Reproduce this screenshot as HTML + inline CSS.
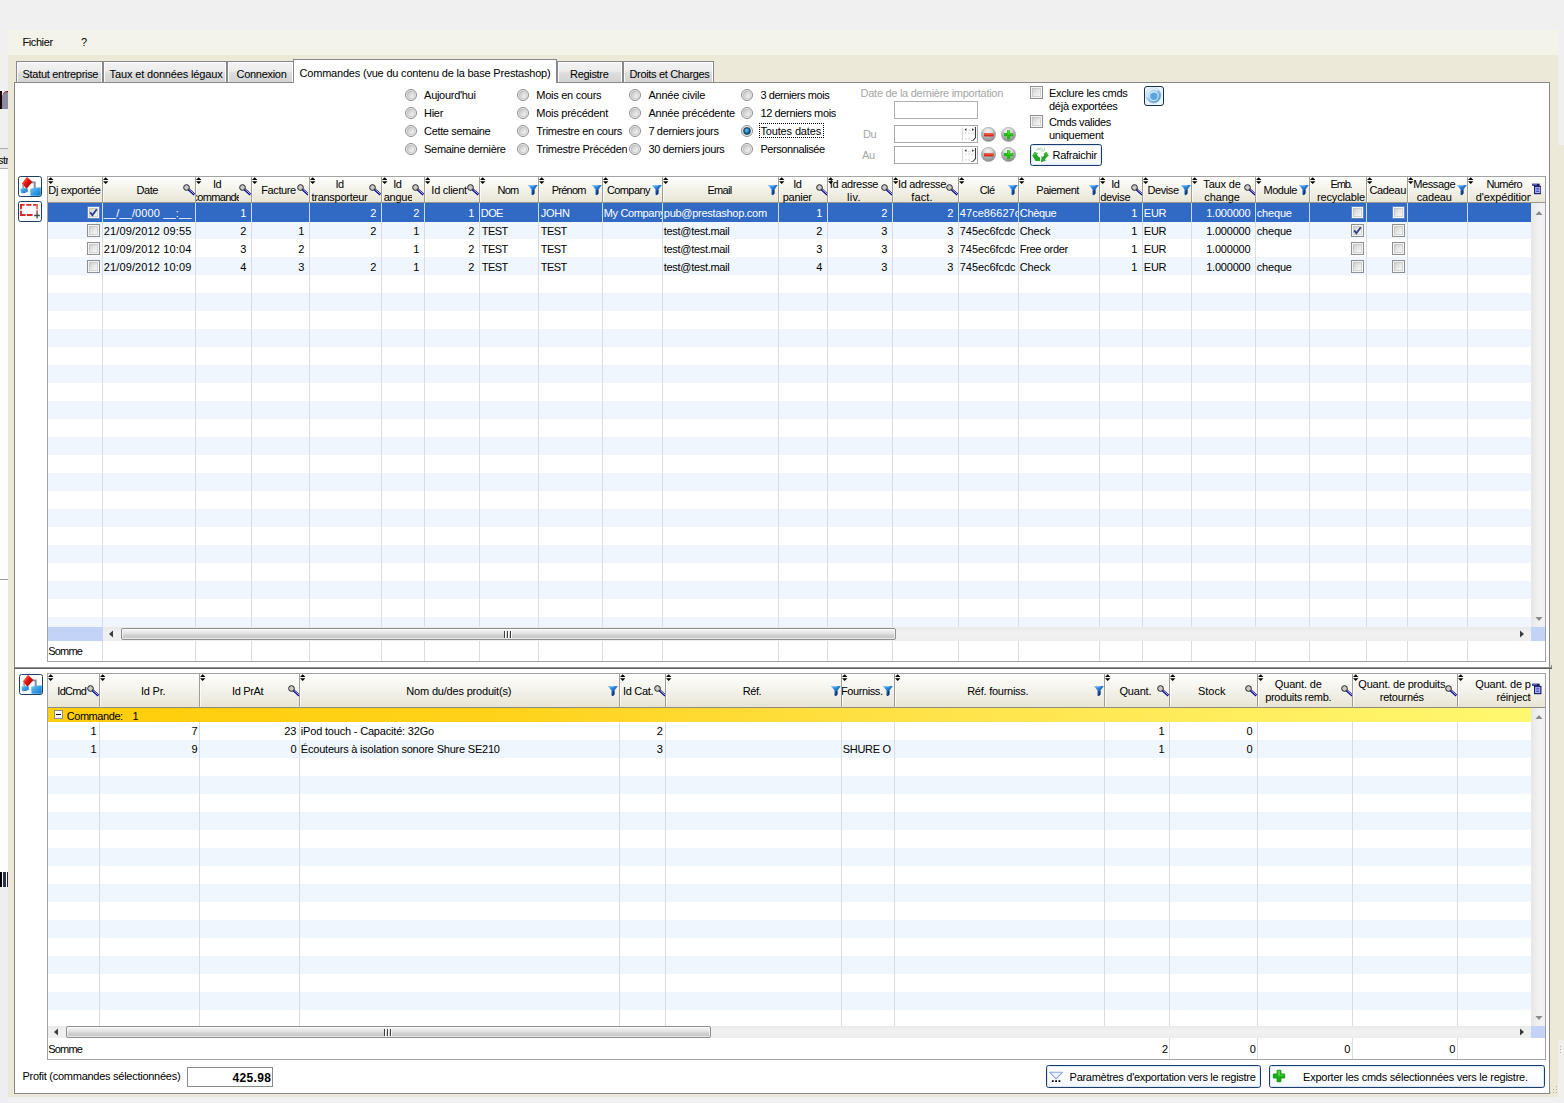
<!DOCTYPE html>
<html><head><meta charset="utf-8"><title>Commandes</title>
<style>
html,body{margin:0;padding:0}
body{width:1564px;height:1103px;overflow:hidden;background:#f0f0f0;position:relative;
font-family:"Liberation Sans", sans-serif;font-size:11px;line-height:13px;color:#000}
div,span.t,svg{position:absolute;box-sizing:border-box}
span.t{white-space:pre;display:block}
</style></head>
<body>
<div style="left:0px;top:169px;width:8px;height:718px;background:#fdfdfd"></div>
<div style="left:0px;top:887px;width:8px;height:216px;background:#eeeef2"></div>
<div style="left:0px;top:91px;width:2px;height:18px;background:#1a0508"></div>
<div style="left:2px;top:91px;width:6px;height:18px;background:#8d8ba2;border-top-left-radius:5px 8px;border-top:1px solid #7a1018"></div>
<div style="left:0px;top:148px;width:8px;height:21px;background:#e9e9e9;border-top:1px solid #b0b0b0;border-bottom:1px solid #b0b0b0"></div>
<span class="t" style="left:-2.00px;top:154.00px;letter-spacing:-0.578px;">str</span>
<div style="left:0px;top:579px;width:8px;height:1px;background:#9a9a9a"></div>
<div style="left:0px;top:872px;width:2px;height:15px;background:#000"></div>
<div style="left:3px;top:872px;width:3px;height:15px;background:#2b3152"></div>
<div style="left:7px;top:872px;width:1px;height:15px;background:#20253c"></div>
<div style="left:8px;top:30px;width:1556px;height:1067px;background:#ece9d8"></div>
<div style="left:8px;top:30px;width:1550px;height:25px;background:#f4f3ea"></div>
<div style="left:1558px;top:30px;width:6px;height:115px;background:#f0f0f0"></div>
<div style="left:1558px;top:1040px;width:6px;height:57px;background:#f1f0ea"></div>
<span class="t" style="left:22.40px;top:36.00px;letter-spacing:-0.388px;">Fichier</span>
<span class="t" style="left:81.00px;top:36.00px;letter-spacing:-0.337px;">?</span>
<div style="left:14px;top:82px;width:1536px;height:1012px;background:#fff;border:1px solid #87888c"></div>
<div style="left:16px;top:61px;width:87px;height:21px;background:linear-gradient(#f3f3f3 0%,#ececec 45%,#dddddd 55%,#d4d4d4 100%);border:1px solid #87888c;border-bottom:none;box-shadow:inset 1px 1px 0 #fcfcfc, inset -1px 0 0 #fcfcfc"></div>
<span class="t" style="left:22.50px;top:68.00px;letter-spacing:-0.295px;">Statut entreprise</span>
<div style="left:103px;top:61px;width:124px;height:21px;background:linear-gradient(#f3f3f3 0%,#ececec 45%,#dddddd 55%,#d4d4d4 100%);border:1px solid #87888c;border-bottom:none;box-shadow:inset 1px 1px 0 #fcfcfc, inset -1px 0 0 #fcfcfc"></div>
<span class="t" style="left:109.60px;top:68.00px;letter-spacing:-0.146px;">Taux et données légaux</span>
<div style="left:227px;top:61px;width:67px;height:21px;background:linear-gradient(#f3f3f3 0%,#ececec 45%,#dddddd 55%,#d4d4d4 100%);border:1px solid #87888c;border-bottom:none;box-shadow:inset 1px 1px 0 #fcfcfc, inset -1px 0 0 #fcfcfc"></div>
<span class="t" style="left:236.50px;top:68.00px;letter-spacing:-0.288px;">Connexion</span>
<div style="left:557px;top:61px;width:66px;height:21px;background:linear-gradient(#f3f3f3 0%,#ececec 45%,#dddddd 55%,#d4d4d4 100%);border:1px solid #87888c;border-bottom:none;box-shadow:inset 1px 1px 0 #fcfcfc, inset -1px 0 0 #fcfcfc"></div>
<span class="t" style="left:570.00px;top:68.00px;letter-spacing:-0.309px;">Registre</span>
<div style="left:623px;top:61px;width:91px;height:21px;background:linear-gradient(#f3f3f3 0%,#ececec 45%,#dddddd 55%,#d4d4d4 100%);border:1px solid #87888c;border-bottom:none;box-shadow:inset 1px 1px 0 #fcfcfc, inset -1px 0 0 #fcfcfc"></div>
<span class="t" style="left:629.50px;top:68.00px;letter-spacing:-0.329px;">Droits et Charges</span>
<div style="left:293px;top:59px;width:264px;height:24px;background:#fff;border:1px solid #87888c;border-bottom:none"></div>
<span class="t" style="left:299.50px;top:67.00px;letter-spacing:-0.198px;">Commandes (vue du contenu de la base Prestashop)</span>
<svg width="0" height="0" style="left:0;top:0"><defs><linearGradient id="rbg" x1="0" y1="0" x2="1" y2="1"><stop offset="0" stop-color="#bdbdbd"/><stop offset="0.5" stop-color="#e0e0e0"/><stop offset="1" stop-color="#fcfcfc"/></linearGradient><radialGradient id="rdot" cx="0.45" cy="0.4" r="0.65"><stop offset="0" stop-color="#74ccf0"/><stop offset="0.45" stop-color="#2584be"/><stop offset="1" stop-color="#0c3a60"/></radialGradient><linearGradient id="cbg" x1="0" y1="0" x2="1" y2="1"><stop offset="0" stop-color="#cbcbcb"/><stop offset="0.55" stop-color="#e9e9e9"/><stop offset="1" stop-color="#fbfbfb"/></linearGradient><linearGradient id="fun" x1="0" y1="0" x2="0.8" y2="1"><stop offset="0" stop-color="#4fb0f4"/><stop offset="0.4" stop-color="#2a80d6"/><stop offset="0.75" stop-color="#144a9c"/><stop offset="1" stop-color="#0a2466"/></linearGradient><radialGradient id="sph" cx="0.45" cy="0.25" r="0.85"><stop offset="0" stop-color="#ececec"/><stop offset="0.55" stop-color="#aeb2b2"/><stop offset="1" stop-color="#727676"/></radialGradient><linearGradient id="bluec" x1="0" y1="0" x2="1" y2="1"><stop offset="0" stop-color="#c6dcea"/><stop offset="0.45" stop-color="#9ccaec"/><stop offset="1" stop-color="#2f7fc4"/></linearGradient></defs></svg>
<svg style="left:404.6px;top:89px" width="12" height="12" viewBox="0 0 12 12"><circle cx="6" cy="6" r="5.5" fill="#f3f3f3" stroke="#8a8b8b" stroke-width="1"/><circle cx="6" cy="6" r="3.9" fill="url(#rbg)" stroke="#b6b6b6" stroke-width="0.7"/></svg>
<span class="t" style="left:424.10px;top:89.00px;letter-spacing:-0.291px;">Aujourd&#x27;hui</span>
<svg style="left:516.8px;top:89px" width="12" height="12" viewBox="0 0 12 12"><circle cx="6" cy="6" r="5.5" fill="#f3f3f3" stroke="#8a8b8b" stroke-width="1"/><circle cx="6" cy="6" r="3.9" fill="url(#rbg)" stroke="#b6b6b6" stroke-width="0.7"/></svg>
<span class="t" style="left:536.30px;top:89.00px;letter-spacing:-0.268px;">Mois en cours</span>
<svg style="left:628.9px;top:89px" width="12" height="12" viewBox="0 0 12 12"><circle cx="6" cy="6" r="5.5" fill="#f3f3f3" stroke="#8a8b8b" stroke-width="1"/><circle cx="6" cy="6" r="3.9" fill="url(#rbg)" stroke="#b6b6b6" stroke-width="0.7"/></svg>
<span class="t" style="left:648.40px;top:89.00px;letter-spacing:-0.219px;">Année civile</span>
<svg style="left:740.9px;top:89px" width="12" height="12" viewBox="0 0 12 12"><circle cx="6" cy="6" r="5.5" fill="#f3f3f3" stroke="#8a8b8b" stroke-width="1"/><circle cx="6" cy="6" r="3.9" fill="url(#rbg)" stroke="#b6b6b6" stroke-width="0.7"/></svg>
<span class="t" style="left:760.40px;top:89.00px;letter-spacing:-0.420px;">3 derniers mois</span>
<svg style="left:404.6px;top:107px" width="12" height="12" viewBox="0 0 12 12"><circle cx="6" cy="6" r="5.5" fill="#f3f3f3" stroke="#8a8b8b" stroke-width="1"/><circle cx="6" cy="6" r="3.9" fill="url(#rbg)" stroke="#b6b6b6" stroke-width="0.7"/></svg>
<span class="t" style="left:424.10px;top:107.00px;letter-spacing:-0.318px;">Hier</span>
<svg style="left:516.8px;top:107px" width="12" height="12" viewBox="0 0 12 12"><circle cx="6" cy="6" r="5.5" fill="#f3f3f3" stroke="#8a8b8b" stroke-width="1"/><circle cx="6" cy="6" r="3.9" fill="url(#rbg)" stroke="#b6b6b6" stroke-width="0.7"/></svg>
<span class="t" style="left:536.30px;top:107.00px;letter-spacing:-0.251px;">Mois précédent</span>
<svg style="left:628.9px;top:107px" width="12" height="12" viewBox="0 0 12 12"><circle cx="6" cy="6" r="5.5" fill="#f3f3f3" stroke="#8a8b8b" stroke-width="1"/><circle cx="6" cy="6" r="3.9" fill="url(#rbg)" stroke="#b6b6b6" stroke-width="0.7"/></svg>
<span class="t" style="left:648.40px;top:107.00px;letter-spacing:-0.214px;">Année précédente</span>
<svg style="left:740.9px;top:107px" width="12" height="12" viewBox="0 0 12 12"><circle cx="6" cy="6" r="5.5" fill="#f3f3f3" stroke="#8a8b8b" stroke-width="1"/><circle cx="6" cy="6" r="3.9" fill="url(#rbg)" stroke="#b6b6b6" stroke-width="0.7"/></svg>
<span class="t" style="left:760.40px;top:107.00px;letter-spacing:-0.364px;">12 derniers mois</span>
<svg style="left:404.6px;top:125px" width="12" height="12" viewBox="0 0 12 12"><circle cx="6" cy="6" r="5.5" fill="#f3f3f3" stroke="#8a8b8b" stroke-width="1"/><circle cx="6" cy="6" r="3.9" fill="url(#rbg)" stroke="#b6b6b6" stroke-width="0.7"/></svg>
<span class="t" style="left:424.10px;top:125.00px;letter-spacing:-0.357px;">Cette semaine</span>
<svg style="left:516.8px;top:125px" width="12" height="12" viewBox="0 0 12 12"><circle cx="6" cy="6" r="5.5" fill="#f3f3f3" stroke="#8a8b8b" stroke-width="1"/><circle cx="6" cy="6" r="3.9" fill="url(#rbg)" stroke="#b6b6b6" stroke-width="0.7"/></svg>
<span class="t" style="left:536.30px;top:125.00px;letter-spacing:-0.311px;">Trimestre en cours</span>
<svg style="left:628.9px;top:125px" width="12" height="12" viewBox="0 0 12 12"><circle cx="6" cy="6" r="5.5" fill="#f3f3f3" stroke="#8a8b8b" stroke-width="1"/><circle cx="6" cy="6" r="3.9" fill="url(#rbg)" stroke="#b6b6b6" stroke-width="0.7"/></svg>
<span class="t" style="left:648.40px;top:125.00px;letter-spacing:-0.352px;">7 derniers jours</span>
<svg style="left:740.9px;top:125px" width="12" height="12" viewBox="0 0 12 12"><circle cx="6" cy="6" r="5.5" fill="#f3f3f3" stroke="#8a8b8b" stroke-width="1"/><circle cx="6" cy="6" r="3.9" fill="url(#rbg)" stroke="#b6b6b6" stroke-width="0.7"/><circle cx="6" cy="6" r="3.4" fill="url(#rdot)" stroke="#0d3556" stroke-width="0.7"/></svg>
<span class="t" style="left:760.40px;top:125.00px;letter-spacing:-0.140px;">Toutes dates</span>
<svg style="left:404.6px;top:143px" width="12" height="12" viewBox="0 0 12 12"><circle cx="6" cy="6" r="5.5" fill="#f3f3f3" stroke="#8a8b8b" stroke-width="1"/><circle cx="6" cy="6" r="3.9" fill="url(#rbg)" stroke="#b6b6b6" stroke-width="0.7"/></svg>
<span class="t" style="left:424.10px;top:143.00px;letter-spacing:-0.334px;">Semaine dernière</span>
<svg style="left:516.8px;top:143px" width="12" height="12" viewBox="0 0 12 12"><circle cx="6" cy="6" r="5.5" fill="#f3f3f3" stroke="#8a8b8b" stroke-width="1"/><circle cx="6" cy="6" r="3.9" fill="url(#rbg)" stroke="#b6b6b6" stroke-width="0.7"/></svg>
<div style="left:536px;top:143.00px;width:91px;height:13px;overflow:hidden"><span class="t" style="left:0.30px;top:0;letter-spacing:-0.287px;">Trimestre Précédent</span></div>
<svg style="left:628.9px;top:143px" width="12" height="12" viewBox="0 0 12 12"><circle cx="6" cy="6" r="5.5" fill="#f3f3f3" stroke="#8a8b8b" stroke-width="1"/><circle cx="6" cy="6" r="3.9" fill="url(#rbg)" stroke="#b6b6b6" stroke-width="0.7"/></svg>
<span class="t" style="left:648.40px;top:143.00px;letter-spacing:-0.343px;">30 derniers jours</span>
<svg style="left:740.9px;top:143px" width="12" height="12" viewBox="0 0 12 12"><circle cx="6" cy="6" r="5.5" fill="#f3f3f3" stroke="#8a8b8b" stroke-width="1"/><circle cx="6" cy="6" r="3.9" fill="url(#rbg)" stroke="#b6b6b6" stroke-width="0.7"/></svg>
<span class="t" style="left:760.40px;top:143.00px;letter-spacing:-0.409px;">Personnalisée</span>
<div style="left:759px;top:123px;width:65px;height:15px;border:1px dotted #000"></div>
<span class="t" style="left:860.60px;top:87.00px;letter-spacing:-0.278px;color:#a6a6a6;">Date de la dernière importation</span>
<div style="left:894px;top:101px;width:84px;height:18px;background:#fff;border:1px solid #abadb3"></div>
<span class="t" style="left:863.00px;top:128.00px;letter-spacing:-0.387px;color:#a6a6a6;">Du</span>
<span class="t" style="left:862.00px;top:149.00px;letter-spacing:-0.370px;color:#a6a6a6;">Au</span>
<div style="left:894px;top:125px;width:84px;height:18px;background:#fff;border:1px solid #a9a9a9"></div>
<svg style="left:961px;top:126px" width="16" height="16" viewBox="0 0 16 16"><path d="M1.5 1.5V14.5" stroke="#d8d8d8" stroke-width="1.2" fill="none"/><path d="M14.5 1V11.5L12 14.5" stroke="#3a3a3a" stroke-width="1.1" fill="none"/><path d="M10 14.5L12 14.5" stroke="#8a8a8a" stroke-width="1" fill="none"/><path d="M5.4 2.2L3.6 3.6L5.4 5Z M11.2 2.2L13 3.6L11.2 5Z" fill="#222"/><path d="M7 4.2H10" stroke="#ddd" stroke-width="1"/><g fill="#e2e2e2"><rect x="4" y="6.5" width="1.6" height="1.6"/><rect x="7" y="6.5" width="1.6" height="1.6"/><rect x="10" y="6.5" width="1.6" height="1.6"/><rect x="12.4" y="6.5" width="1.2" height="1.6"/><rect x="4" y="12" width="1.6" height="1.6"/><rect x="7" y="12" width="1.6" height="1.6"/></g></svg>
<svg style="left:980.9px;top:126.80000000000001px" width="15" height="15" viewBox="0 0 15 15"><circle cx="7.5" cy="7.5" r="7.1" fill="url(#sph)" stroke="#9a9aa0" stroke-width="0.6"/><ellipse cx="7.2" cy="4.2" rx="4.8" ry="2.6" fill="#fff" fill-opacity="0.35"/><rect x="3" y="6.2" width="9.6" height="3.2" rx="0.8" fill="#d8281c"/><rect x="3.4" y="6.5" width="8.8" height="1.2" rx="0.6" fill="#f2705a" fill-opacity="0.8"/></svg>
<svg style="left:1001.1px;top:126.80000000000001px" width="15" height="15" viewBox="0 0 15 15"><circle cx="7.5" cy="7.5" r="7.1" fill="url(#sph)" stroke="#9a9aa0" stroke-width="0.6"/><ellipse cx="7.2" cy="4.2" rx="4.8" ry="2.6" fill="#fff" fill-opacity="0.35"/><path d="M6 3.2H9.2V6H12.2V9.2H9.2V12.2H6V9.2H3V6H6Z" fill="#22b814"/><path d="M6.6 3.8H8.6V6.6H11.6V7.4H6.6Z" fill="#5fe048" fill-opacity="0.7"/></svg>
<div style="left:894px;top:146px;width:84px;height:18px;background:#fff;border:1px solid #a9a9a9"></div>
<svg style="left:961px;top:147px" width="16" height="16" viewBox="0 0 16 16"><path d="M1.5 1.5V14.5" stroke="#d8d8d8" stroke-width="1.2" fill="none"/><path d="M14.5 1V11.5L12 14.5" stroke="#3a3a3a" stroke-width="1.1" fill="none"/><path d="M10 14.5L12 14.5" stroke="#8a8a8a" stroke-width="1" fill="none"/><path d="M5.4 2.2L3.6 3.6L5.4 5Z M11.2 2.2L13 3.6L11.2 5Z" fill="#222"/><path d="M7 4.2H10" stroke="#ddd" stroke-width="1"/><g fill="#e2e2e2"><rect x="4" y="6.5" width="1.6" height="1.6"/><rect x="7" y="6.5" width="1.6" height="1.6"/><rect x="10" y="6.5" width="1.6" height="1.6"/><rect x="12.4" y="6.5" width="1.2" height="1.6"/><rect x="4" y="12" width="1.6" height="1.6"/><rect x="7" y="12" width="1.6" height="1.6"/></g></svg>
<svg style="left:980.9px;top:147.1px" width="15" height="15" viewBox="0 0 15 15"><circle cx="7.5" cy="7.5" r="7.1" fill="url(#sph)" stroke="#9a9aa0" stroke-width="0.6"/><ellipse cx="7.2" cy="4.2" rx="4.8" ry="2.6" fill="#fff" fill-opacity="0.35"/><rect x="3" y="6.2" width="9.6" height="3.2" rx="0.8" fill="#d8281c"/><rect x="3.4" y="6.5" width="8.8" height="1.2" rx="0.6" fill="#f2705a" fill-opacity="0.8"/></svg>
<svg style="left:1001.1px;top:147.1px" width="15" height="15" viewBox="0 0 15 15"><circle cx="7.5" cy="7.5" r="7.1" fill="url(#sph)" stroke="#9a9aa0" stroke-width="0.6"/><ellipse cx="7.2" cy="4.2" rx="4.8" ry="2.6" fill="#fff" fill-opacity="0.35"/><path d="M6 3.2H9.2V6H12.2V9.2H9.2V12.2H6V9.2H3V6H6Z" fill="#22b814"/><path d="M6.6 3.8H8.6V6.6H11.6V7.4H6.6Z" fill="#5fe048" fill-opacity="0.7"/></svg>
<svg style="left:1030px;top:86px" width="13" height="13" viewBox="0 0 13 13"><rect x="0.5" y="0.5" width="12" height="12" fill="#f4f4f4" stroke="#8e8f8f"/><rect x="2" y="2" width="9" height="9" fill="url(#cbg)"/><rect x="2.5" y="2.5" width="8" height="8" fill="none" stroke="#bcbcbc" stroke-opacity="0.55"/></svg>
<span class="t" style="left:1049.00px;top:87.00px;letter-spacing:-0.290px;">Exclure les cmds</span>
<span class="t" style="left:1049.00px;top:100.00px;letter-spacing:-0.262px;">déjà exportées</span>
<svg style="left:1030px;top:115px" width="13" height="13" viewBox="0 0 13 13"><rect x="0.5" y="0.5" width="12" height="12" fill="#f4f4f4" stroke="#8e8f8f"/><rect x="2" y="2" width="9" height="9" fill="url(#cbg)"/><rect x="2.5" y="2.5" width="8" height="8" fill="none" stroke="#bcbcbc" stroke-opacity="0.55"/></svg>
<span class="t" style="left:1049.00px;top:116.00px;letter-spacing:-0.336px;">Cmds valides</span>
<span class="t" style="left:1049.00px;top:129.00px;letter-spacing:-0.300px;">uniquement</span>
<div style="left:1030px;top:144px;width:72px;height:22px;background:linear-gradient(#ffffff 0%,#fdfeff 50%,#f1f6fc 100%);border:1.4px solid #1b3d6e;border-radius:2.6px;box-shadow:inset 0 0 0 1px #dbe8f8"></div>
<svg style="left:1032px;top:146.5px" width="17" height="16" viewBox="0 0 17 16"><g fill="none" stroke="#a4d9a0" stroke-width="0.9"><path d="M3.8 4L6 1.2H9.4L10.8 3.2"/><path d="M8.8 3.8L12 4L12.8 0.9"/><path d="M5.6 2.6L8.6 2.4"/></g><g fill="#22a822"><path d="M0.2 8.8L2.6 4.8L6 6.6L4.8 7.6L6.8 10.2H8V14H3.6L1.4 10.6Z"/><path d="M16.6 8.6L14.4 4.8L11.4 7L12.6 7.8L10.8 10L9.6 9L9 15.2L14 13.6L12.8 12.6L15 10Z"/></g><path d="M1.4 8.6L3 6L5 7" fill="none" stroke="#63d658" stroke-width="0.9"/><path d="M15.4 8.4L14 6.2" fill="none" stroke="#63d658" stroke-width="0.9"/></svg>
<span class="t" style="left:1052.60px;top:149.00px;letter-spacing:-0.288px;">Rafraichir</span>
<div style="left:1144px;top:86px;width:20px;height:20px;background:#e9f4fe;border:1.4px solid #17304e;border-radius:3px"></div>
<svg style="left:1145.4px;top:87.4px" width="17" height="17" viewBox="0 0 17 17"><circle cx="8.5" cy="8.5" r="7.5" fill="url(#bluec)" stroke="#8fbbe0" stroke-width="0.7"/><path d="M2.6 10.2A6.2 6.2 0 0 1 12.4 3.4" fill="none" stroke="#eef8fd" stroke-width="2" stroke-opacity="0.75"/><circle cx="8.9" cy="9.2" r="4.3" fill="#58a6e2" stroke="#d8f0ff" stroke-width="1.1" stroke-opacity="0.95"/></svg>
<div style="left:18px;top:176px;width:24px;height:21px;background:linear-gradient(#ffffff,#f4f8fd);border:1.5px solid #1b3f66;border-radius:2.6px;overflow:hidden"></div>
<svg style="left:20px;top:177px" width="20.8" height="18.8" viewBox="0 0 20.8 18.8"><defs><linearGradient id="bl1" x1="0" y1="0" x2="1" y2="1"><stop offset="0" stop-color="#6ec6f4"/><stop offset="0.6" stop-color="#2f97df"/><stop offset="1" stop-color="#1672c4"/></linearGradient><linearGradient id="rd1" x1="0" y1="0" x2="1" y2="0.8"><stop offset="0" stop-color="#f02418"/><stop offset="0.55" stop-color="#dc1408"/><stop offset="1" stop-color="#8e0804"/></linearGradient></defs><path d="M11.6 4.6H15.7V10.9H13.7V6.2H11.6Z" fill="#858da6"/><path d="M2.3 7.8H4.2V11.4H2.3Z" fill="#9aa2ba"/><path d="M10.2 12Q15 10.2 20.8 10.6V18.8H10.5Z" fill="url(#bl1)"/><path d="M0.4 11.8Q4 10.2 7.7 11.4L7.9 13.6Q4.6 16 0.9 15.2Z" fill="url(#bl1)"/><path d="M0.9 15.2Q4.6 16 7.9 13.6L7.6 14.8Q4.4 16.6 1.4 16Z" fill="#0f62b4"/><path d="M7 0.1L12.5 4.9L6.5 11.8L2 6.5Z" fill="url(#rd1)"/><path d="M7 0.1L8.6 1.5L3.4 8L2 6.5Z" fill="#ff5a48" fill-opacity="0.55"/></svg>
<div style="left:18px;top:201px;width:24px;height:21px;background:linear-gradient(#ffffff,#f4f8fd);border:1.5px solid #1b3f66;border-radius:2.6px;overflow:hidden"></div>
<svg style="left:20px;top:203px" width="20.5" height="17" viewBox="0 0 20.5 17"><g stroke="#d82424" stroke-width="1.9" fill="none"><path d="M0 1.9H4.6M6.3 1.9H11.4M13.1 1.9H18"/><path d="M0 12H5.6M6.9 12H12.6"/><path d="M0.95 1V6.2M0.95 7.7V12.9"/></g><path d="M17.1 1V6.2M17.1 7.2V10.4" stroke="#e46a6a" stroke-width="1.8" fill="none"/><path d="M14.2 12.5H19.8M17.1 9.8V15.4" stroke="#444" stroke-width="1.3" fill="none"/></svg>
<div style="left:47px;top:176px;width:1499px;height:486px;background:#fff;border:1px solid #a3a3a3"></div>
<div style="left:48px;top:221px;width:1483px;height:18px;background:#f0f6fd"></div>
<div style="left:48px;top:257px;width:1483px;height:18px;background:#f0f6fd"></div>
<div style="left:48px;top:293px;width:1483px;height:18px;background:#f0f6fd"></div>
<div style="left:48px;top:329px;width:1483px;height:18px;background:#f0f6fd"></div>
<div style="left:48px;top:365px;width:1483px;height:18px;background:#f0f6fd"></div>
<div style="left:48px;top:401px;width:1483px;height:18px;background:#f0f6fd"></div>
<div style="left:48px;top:437px;width:1483px;height:18px;background:#f0f6fd"></div>
<div style="left:48px;top:473px;width:1483px;height:18px;background:#f0f6fd"></div>
<div style="left:48px;top:509px;width:1483px;height:18px;background:#f0f6fd"></div>
<div style="left:48px;top:545px;width:1483px;height:18px;background:#f0f6fd"></div>
<div style="left:48px;top:581px;width:1483px;height:18px;background:#f0f6fd"></div>
<div style="left:48px;top:617px;width:1483px;height:10px;background:#f0f6fd"></div>
<div style="left:48px;top:203px;width:1483px;height:18.6px;background:#316ac5"></div>
<div style="left:48px;top:177px;width:1497px;height:26px;background:linear-gradient(#fefefd 0%,#f7f6f0 35%,#efede2 70%,#e8e5d5 100%);border-bottom:1px solid #9a988e"></div>
<div style="left:102px;top:177px;width:1px;height:26px;background:#a09e94"></div>
<div style="left:103px;top:177px;width:1px;height:25px;background:rgba(255,255,255,.7)"></div>
<div style="left:102px;top:203px;width:1px;height:424px;background:#dadce1"></div>
<div style="left:102px;top:203px;width:1px;height:18.6px;background:#c9dcf6"></div>
<div style="left:102px;top:641px;width:1px;height:20px;background:#dcdcdc"></div>
<div style="left:195px;top:177px;width:1px;height:26px;background:#a09e94"></div>
<div style="left:196px;top:177px;width:1px;height:25px;background:rgba(255,255,255,.7)"></div>
<div style="left:195px;top:203px;width:1px;height:424px;background:#dadce1"></div>
<div style="left:195px;top:203px;width:1px;height:18.6px;background:#c9dcf6"></div>
<div style="left:195px;top:641px;width:1px;height:20px;background:#dcdcdc"></div>
<div style="left:251px;top:177px;width:1px;height:26px;background:#a09e94"></div>
<div style="left:252px;top:177px;width:1px;height:25px;background:rgba(255,255,255,.7)"></div>
<div style="left:251px;top:203px;width:1px;height:424px;background:#dadce1"></div>
<div style="left:251px;top:203px;width:1px;height:18.6px;background:#c9dcf6"></div>
<div style="left:251px;top:641px;width:1px;height:20px;background:#dcdcdc"></div>
<div style="left:309px;top:177px;width:1px;height:26px;background:#a09e94"></div>
<div style="left:310px;top:177px;width:1px;height:25px;background:rgba(255,255,255,.7)"></div>
<div style="left:309px;top:203px;width:1px;height:424px;background:#dadce1"></div>
<div style="left:309px;top:203px;width:1px;height:18.6px;background:#c9dcf6"></div>
<div style="left:309px;top:641px;width:1px;height:20px;background:#dcdcdc"></div>
<div style="left:381px;top:177px;width:1px;height:26px;background:#a09e94"></div>
<div style="left:382px;top:177px;width:1px;height:25px;background:rgba(255,255,255,.7)"></div>
<div style="left:381px;top:203px;width:1px;height:424px;background:#dadce1"></div>
<div style="left:381px;top:203px;width:1px;height:18.6px;background:#c9dcf6"></div>
<div style="left:381px;top:641px;width:1px;height:20px;background:#dcdcdc"></div>
<div style="left:424px;top:177px;width:1px;height:26px;background:#a09e94"></div>
<div style="left:425px;top:177px;width:1px;height:25px;background:rgba(255,255,255,.7)"></div>
<div style="left:424px;top:203px;width:1px;height:424px;background:#dadce1"></div>
<div style="left:424px;top:203px;width:1px;height:18.6px;background:#c9dcf6"></div>
<div style="left:424px;top:641px;width:1px;height:20px;background:#dcdcdc"></div>
<div style="left:479px;top:177px;width:1px;height:26px;background:#a09e94"></div>
<div style="left:480px;top:177px;width:1px;height:25px;background:rgba(255,255,255,.7)"></div>
<div style="left:479px;top:203px;width:1px;height:424px;background:#dadce1"></div>
<div style="left:479px;top:203px;width:1px;height:18.6px;background:#c9dcf6"></div>
<div style="left:479px;top:641px;width:1px;height:20px;background:#dcdcdc"></div>
<div style="left:538px;top:177px;width:1px;height:26px;background:#a09e94"></div>
<div style="left:539px;top:177px;width:1px;height:25px;background:rgba(255,255,255,.7)"></div>
<div style="left:538px;top:203px;width:1px;height:424px;background:#dadce1"></div>
<div style="left:538px;top:203px;width:1px;height:18.6px;background:#c9dcf6"></div>
<div style="left:538px;top:641px;width:1px;height:20px;background:#dcdcdc"></div>
<div style="left:602px;top:177px;width:1px;height:26px;background:#a09e94"></div>
<div style="left:603px;top:177px;width:1px;height:25px;background:rgba(255,255,255,.7)"></div>
<div style="left:602px;top:203px;width:1px;height:424px;background:#dadce1"></div>
<div style="left:602px;top:203px;width:1px;height:18.6px;background:#c9dcf6"></div>
<div style="left:602px;top:641px;width:1px;height:20px;background:#dcdcdc"></div>
<div style="left:662px;top:177px;width:1px;height:26px;background:#a09e94"></div>
<div style="left:663px;top:177px;width:1px;height:25px;background:rgba(255,255,255,.7)"></div>
<div style="left:662px;top:203px;width:1px;height:424px;background:#dadce1"></div>
<div style="left:662px;top:203px;width:1px;height:18.6px;background:#c9dcf6"></div>
<div style="left:662px;top:641px;width:1px;height:20px;background:#dcdcdc"></div>
<div style="left:778px;top:177px;width:1px;height:26px;background:#a09e94"></div>
<div style="left:779px;top:177px;width:1px;height:25px;background:rgba(255,255,255,.7)"></div>
<div style="left:778px;top:203px;width:1px;height:424px;background:#dadce1"></div>
<div style="left:778px;top:203px;width:1px;height:18.6px;background:#c9dcf6"></div>
<div style="left:778px;top:641px;width:1px;height:20px;background:#dcdcdc"></div>
<div style="left:827px;top:177px;width:1px;height:26px;background:#a09e94"></div>
<div style="left:828px;top:177px;width:1px;height:25px;background:rgba(255,255,255,.7)"></div>
<div style="left:827px;top:203px;width:1px;height:424px;background:#dadce1"></div>
<div style="left:827px;top:203px;width:1px;height:18.6px;background:#c9dcf6"></div>
<div style="left:827px;top:641px;width:1px;height:20px;background:#dcdcdc"></div>
<div style="left:892px;top:177px;width:1px;height:26px;background:#a09e94"></div>
<div style="left:893px;top:177px;width:1px;height:25px;background:rgba(255,255,255,.7)"></div>
<div style="left:892px;top:203px;width:1px;height:424px;background:#dadce1"></div>
<div style="left:892px;top:203px;width:1px;height:18.6px;background:#c9dcf6"></div>
<div style="left:892px;top:641px;width:1px;height:20px;background:#dcdcdc"></div>
<div style="left:958px;top:177px;width:1px;height:26px;background:#a09e94"></div>
<div style="left:959px;top:177px;width:1px;height:25px;background:rgba(255,255,255,.7)"></div>
<div style="left:958px;top:203px;width:1px;height:424px;background:#dadce1"></div>
<div style="left:958px;top:203px;width:1px;height:18.6px;background:#c9dcf6"></div>
<div style="left:958px;top:641px;width:1px;height:20px;background:#dcdcdc"></div>
<div style="left:1018px;top:177px;width:1px;height:26px;background:#a09e94"></div>
<div style="left:1019px;top:177px;width:1px;height:25px;background:rgba(255,255,255,.7)"></div>
<div style="left:1018px;top:203px;width:1px;height:424px;background:#dadce1"></div>
<div style="left:1018px;top:203px;width:1px;height:18.6px;background:#c9dcf6"></div>
<div style="left:1018px;top:641px;width:1px;height:20px;background:#dcdcdc"></div>
<div style="left:1099px;top:177px;width:1px;height:26px;background:#a09e94"></div>
<div style="left:1100px;top:177px;width:1px;height:25px;background:rgba(255,255,255,.7)"></div>
<div style="left:1099px;top:203px;width:1px;height:424px;background:#dadce1"></div>
<div style="left:1099px;top:203px;width:1px;height:18.6px;background:#c9dcf6"></div>
<div style="left:1099px;top:641px;width:1px;height:20px;background:#dcdcdc"></div>
<div style="left:1142px;top:177px;width:1px;height:26px;background:#a09e94"></div>
<div style="left:1143px;top:177px;width:1px;height:25px;background:rgba(255,255,255,.7)"></div>
<div style="left:1142px;top:203px;width:1px;height:424px;background:#dadce1"></div>
<div style="left:1142px;top:203px;width:1px;height:18.6px;background:#c9dcf6"></div>
<div style="left:1142px;top:641px;width:1px;height:20px;background:#dcdcdc"></div>
<div style="left:1191px;top:177px;width:1px;height:26px;background:#a09e94"></div>
<div style="left:1192px;top:177px;width:1px;height:25px;background:rgba(255,255,255,.7)"></div>
<div style="left:1191px;top:203px;width:1px;height:424px;background:#dadce1"></div>
<div style="left:1191px;top:203px;width:1px;height:18.6px;background:#c9dcf6"></div>
<div style="left:1191px;top:641px;width:1px;height:20px;background:#dcdcdc"></div>
<div style="left:1255px;top:177px;width:1px;height:26px;background:#a09e94"></div>
<div style="left:1256px;top:177px;width:1px;height:25px;background:rgba(255,255,255,.7)"></div>
<div style="left:1255px;top:203px;width:1px;height:424px;background:#dadce1"></div>
<div style="left:1255px;top:203px;width:1px;height:18.6px;background:#c9dcf6"></div>
<div style="left:1255px;top:641px;width:1px;height:20px;background:#dcdcdc"></div>
<div style="left:1309px;top:177px;width:1px;height:26px;background:#a09e94"></div>
<div style="left:1310px;top:177px;width:1px;height:25px;background:rgba(255,255,255,.7)"></div>
<div style="left:1309px;top:203px;width:1px;height:424px;background:#dadce1"></div>
<div style="left:1309px;top:203px;width:1px;height:18.6px;background:#c9dcf6"></div>
<div style="left:1309px;top:641px;width:1px;height:20px;background:#dcdcdc"></div>
<div style="left:1366px;top:177px;width:1px;height:26px;background:#a09e94"></div>
<div style="left:1367px;top:177px;width:1px;height:25px;background:rgba(255,255,255,.7)"></div>
<div style="left:1366px;top:203px;width:1px;height:424px;background:#dadce1"></div>
<div style="left:1366px;top:203px;width:1px;height:18.6px;background:#c9dcf6"></div>
<div style="left:1366px;top:641px;width:1px;height:20px;background:#dcdcdc"></div>
<div style="left:1407px;top:177px;width:1px;height:26px;background:#a09e94"></div>
<div style="left:1408px;top:177px;width:1px;height:25px;background:rgba(255,255,255,.7)"></div>
<div style="left:1407px;top:203px;width:1px;height:424px;background:#dadce1"></div>
<div style="left:1407px;top:203px;width:1px;height:18.6px;background:#c9dcf6"></div>
<div style="left:1407px;top:641px;width:1px;height:20px;background:#dcdcdc"></div>
<div style="left:1467px;top:177px;width:1px;height:26px;background:#a09e94"></div>
<div style="left:1468px;top:177px;width:1px;height:25px;background:rgba(255,255,255,.7)"></div>
<div style="left:1467px;top:203px;width:1px;height:424px;background:#dadce1"></div>
<div style="left:1467px;top:203px;width:1px;height:18.6px;background:#c9dcf6"></div>
<div style="left:1467px;top:641px;width:1px;height:20px;background:#dcdcdc"></div>
<svg style="left:48px;top:177px" width="6" height="8" viewBox="0 0 6 8"><path d="M2.7 0.3L5.4 3H0Z M0 4.3H5.4L2.7 7Z" fill="#000"/></svg>
<svg style="left:103px;top:177px" width="6" height="8" viewBox="0 0 6 8"><path d="M2.7 0.3L5.4 3H0Z M0 4.3H5.4L2.7 7Z" fill="#000"/></svg>
<svg style="left:196px;top:177px" width="6" height="8" viewBox="0 0 6 8"><path d="M2.7 0.3L5.4 3H0Z M0 4.3H5.4L2.7 7Z" fill="#000"/></svg>
<svg style="left:252px;top:177px" width="6" height="8" viewBox="0 0 6 8"><path d="M2.7 0.3L5.4 3H0Z M0 4.3H5.4L2.7 7Z" fill="#000"/></svg>
<svg style="left:310px;top:177px" width="6" height="8" viewBox="0 0 6 8"><path d="M2.7 0.3L5.4 3H0Z M0 4.3H5.4L2.7 7Z" fill="#000"/></svg>
<svg style="left:382px;top:177px" width="6" height="8" viewBox="0 0 6 8"><path d="M2.7 0.3L5.4 3H0Z M0 4.3H5.4L2.7 7Z" fill="#000"/></svg>
<svg style="left:425px;top:177px" width="6" height="8" viewBox="0 0 6 8"><path d="M2.7 0.3L5.4 3H0Z M0 4.3H5.4L2.7 7Z" fill="#000"/></svg>
<svg style="left:480px;top:177px" width="6" height="8" viewBox="0 0 6 8"><path d="M2.7 0.3L5.4 3H0Z M0 4.3H5.4L2.7 7Z" fill="#000"/></svg>
<svg style="left:539px;top:177px" width="6" height="8" viewBox="0 0 6 8"><path d="M2.7 0.3L5.4 3H0Z M0 4.3H5.4L2.7 7Z" fill="#000"/></svg>
<svg style="left:603px;top:177px" width="6" height="8" viewBox="0 0 6 8"><path d="M2.7 0.3L5.4 3H0Z M0 4.3H5.4L2.7 7Z" fill="#000"/></svg>
<svg style="left:663px;top:177px" width="6" height="8" viewBox="0 0 6 8"><path d="M2.7 0.3L5.4 3H0Z M0 4.3H5.4L2.7 7Z" fill="#000"/></svg>
<svg style="left:779px;top:177px" width="6" height="8" viewBox="0 0 6 8"><path d="M2.7 0.3L5.4 3H0Z M0 4.3H5.4L2.7 7Z" fill="#000"/></svg>
<svg style="left:828px;top:177px" width="6" height="8" viewBox="0 0 6 8"><path d="M2.7 0.3L5.4 3H0Z M0 4.3H5.4L2.7 7Z" fill="#000"/></svg>
<svg style="left:893px;top:177px" width="6" height="8" viewBox="0 0 6 8"><path d="M2.7 0.3L5.4 3H0Z M0 4.3H5.4L2.7 7Z" fill="#000"/></svg>
<svg style="left:959px;top:177px" width="6" height="8" viewBox="0 0 6 8"><path d="M2.7 0.3L5.4 3H0Z M0 4.3H5.4L2.7 7Z" fill="#000"/></svg>
<svg style="left:1019px;top:177px" width="6" height="8" viewBox="0 0 6 8"><path d="M2.7 0.3L5.4 3H0Z M0 4.3H5.4L2.7 7Z" fill="#000"/></svg>
<svg style="left:1100px;top:177px" width="6" height="8" viewBox="0 0 6 8"><path d="M2.7 0.3L5.4 3H0Z M0 4.3H5.4L2.7 7Z" fill="#000"/></svg>
<svg style="left:1143px;top:177px" width="6" height="8" viewBox="0 0 6 8"><path d="M2.7 0.3L5.4 3H0Z M0 4.3H5.4L2.7 7Z" fill="#000"/></svg>
<svg style="left:1192px;top:177px" width="6" height="8" viewBox="0 0 6 8"><path d="M2.7 0.3L5.4 3H0Z M0 4.3H5.4L2.7 7Z" fill="#000"/></svg>
<svg style="left:1256px;top:177px" width="6" height="8" viewBox="0 0 6 8"><path d="M2.7 0.3L5.4 3H0Z M0 4.3H5.4L2.7 7Z" fill="#000"/></svg>
<svg style="left:1310px;top:177px" width="6" height="8" viewBox="0 0 6 8"><path d="M2.7 0.3L5.4 3H0Z M0 4.3H5.4L2.7 7Z" fill="#000"/></svg>
<svg style="left:1367px;top:177px" width="6" height="8" viewBox="0 0 6 8"><path d="M2.7 0.3L5.4 3H0Z M0 4.3H5.4L2.7 7Z" fill="#000"/></svg>
<svg style="left:1408px;top:177px" width="6" height="8" viewBox="0 0 6 8"><path d="M2.7 0.3L5.4 3H0Z M0 4.3H5.4L2.7 7Z" fill="#000"/></svg>
<svg style="left:1468px;top:177px" width="6" height="8" viewBox="0 0 6 8"><path d="M2.7 0.3L5.4 3H0Z M0 4.3H5.4L2.7 7Z" fill="#000"/></svg>
<span class="t" style="left:48.35px;top:184.00px;letter-spacing:-0.361px;">Dj exportée</span>
<svg style="left:183.2px;top:184.3px" width="11.6" height="12" viewBox="0 0 11.6 12"><path d="M5.3 5.2L11.4 10.6" stroke="#000090" stroke-width="2.4" fill="none"/><path d="M6.1 5.5L11.5 10.3" stroke="#fff" stroke-width="0.7" fill="none"/><circle cx="3.5" cy="3.5" r="2.85" fill="#c9c9c9" stroke="#1a1a1a" stroke-width="0.95"/></svg>
<span class="t" style="left:136.55px;top:184.00px;letter-spacing:-0.438px;">Date</span>
<svg style="left:239.2px;top:184.3px" width="11.6" height="12" viewBox="0 0 11.6 12"><path d="M5.3 5.2L11.4 10.6" stroke="#000090" stroke-width="2.4" fill="none"/><path d="M6.1 5.5L11.5 10.3" stroke="#fff" stroke-width="0.7" fill="none"/><circle cx="3.5" cy="3.5" r="2.85" fill="#c9c9c9" stroke="#1a1a1a" stroke-width="0.95"/></svg>
<div style="left:196px;top:178.00px;width:43px;height:13px;overflow:hidden"><span class="t" style="left:17.00px;top:0;letter-spacing:-0.594px;">Id</span></div>
<div style="left:196px;top:191.00px;width:43px;height:13px;overflow:hidden"><span class="t" style="left:-3.50px;top:0;letter-spacing:-0.678px;">commande</span></div>
<svg style="left:296.9px;top:184.3px" width="11.6" height="12" viewBox="0 0 11.6 12"><path d="M5.3 5.2L11.4 10.6" stroke="#000090" stroke-width="2.4" fill="none"/><path d="M6.1 5.5L11.5 10.3" stroke="#fff" stroke-width="0.7" fill="none"/><circle cx="3.5" cy="3.5" r="2.85" fill="#c9c9c9" stroke="#1a1a1a" stroke-width="0.95"/></svg>
<span class="t" style="left:261.25px;top:184.00px;letter-spacing:-0.400px;">Facture</span>
<svg style="left:369.4px;top:184.3px" width="11.6" height="12" viewBox="0 0 11.6 12"><path d="M5.3 5.2L11.4 10.6" stroke="#000090" stroke-width="2.4" fill="none"/><path d="M6.1 5.5L11.5 10.3" stroke="#fff" stroke-width="0.7" fill="none"/><circle cx="3.5" cy="3.5" r="2.85" fill="#c9c9c9" stroke="#1a1a1a" stroke-width="0.95"/></svg>
<span class="t" style="left:335.50px;top:178.00px;letter-spacing:-0.594px;">Id</span>
<span class="t" style="left:311.50px;top:191.00px;letter-spacing:-0.276px;">transporteur</span>
<svg style="left:412.3px;top:184.3px" width="11.6" height="12" viewBox="0 0 11.6 12"><path d="M5.3 5.2L11.4 10.6" stroke="#000090" stroke-width="2.4" fill="none"/><path d="M6.1 5.5L11.5 10.3" stroke="#fff" stroke-width="0.7" fill="none"/><circle cx="3.5" cy="3.5" r="2.85" fill="#c9c9c9" stroke="#1a1a1a" stroke-width="0.95"/></svg>
<div style="left:383.6px;top:178.00px;width:28.899999999999977px;height:13px;overflow:hidden"><span class="t" style="left:9.70px;top:0;letter-spacing:-0.594px;">Id</span></div>
<div style="left:383.6px;top:191.00px;width:28.899999999999977px;height:13px;overflow:hidden"><span class="t" style="left:-2.05px;top:0;letter-spacing:-0.258px;">langue</span></div>
<svg style="left:467.3px;top:184.3px" width="11.6" height="12" viewBox="0 0 11.6 12"><path d="M5.3 5.2L11.4 10.6" stroke="#000090" stroke-width="2.4" fill="none"/><path d="M6.1 5.5L11.5 10.3" stroke="#fff" stroke-width="0.7" fill="none"/><circle cx="3.5" cy="3.5" r="2.85" fill="#c9c9c9" stroke="#1a1a1a" stroke-width="0.95"/></svg>
<span class="t" style="left:431.35px;top:184.00px;letter-spacing:-0.269px;">Id client</span>
<svg style="left:527.9px;top:185.2px" width="10" height="10.4" viewBox="0 0 10 10.4"><path d="M0 0.1H9.8L6.5 4.5V8.4L4.7 10.2L3.5 9.4V4.5Z" fill="url(#fun)"/><path d="M6.5 4.5V8.4L4.7 10.2V5.2Z" fill="#0a1f5c" fill-opacity="0.55"/><path d="M0.9 0.7H6.4" stroke="#9fd8ff" stroke-width="0.8" fill="none"/></svg>
<span class="t" style="left:497.60px;top:184.00px;letter-spacing:-0.811px;">Nom</span>
<svg style="left:591.6px;top:185.2px" width="10" height="10.4" viewBox="0 0 10 10.4"><path d="M0 0.1H9.8L6.5 4.5V8.4L4.7 10.2L3.5 9.4V4.5Z" fill="url(#fun)"/><path d="M6.5 4.5V8.4L4.7 10.2V5.2Z" fill="#0a1f5c" fill-opacity="0.55"/><path d="M0.9 0.7H6.4" stroke="#9fd8ff" stroke-width="0.8" fill="none"/></svg>
<span class="t" style="left:551.65px;top:184.00px;letter-spacing:-0.739px;">Prénom</span>
<svg style="left:651.8px;top:185.2px" width="10" height="10.4" viewBox="0 0 10 10.4"><path d="M0 0.1H9.8L6.5 4.5V8.4L4.7 10.2L3.5 9.4V4.5Z" fill="url(#fun)"/><path d="M6.5 4.5V8.4L4.7 10.2V5.2Z" fill="#0a1f5c" fill-opacity="0.55"/><path d="M0.9 0.7H6.4" stroke="#9fd8ff" stroke-width="0.8" fill="none"/></svg>
<span class="t" style="left:606.90px;top:184.00px;letter-spacing:-0.583px;">Company</span>
<svg style="left:768px;top:185.2px" width="10" height="10.4" viewBox="0 0 10 10.4"><path d="M0 0.1H9.8L6.5 4.5V8.4L4.7 10.2L3.5 9.4V4.5Z" fill="url(#fun)"/><path d="M6.5 4.5V8.4L4.7 10.2V5.2Z" fill="#0a1f5c" fill-opacity="0.55"/><path d="M0.9 0.7H6.4" stroke="#9fd8ff" stroke-width="0.8" fill="none"/></svg>
<span class="t" style="left:707.40px;top:184.00px;letter-spacing:-0.703px;">Email</span>
<svg style="left:815.8px;top:184.3px" width="11.6" height="12" viewBox="0 0 11.6 12"><path d="M5.3 5.2L11.4 10.6" stroke="#000090" stroke-width="2.4" fill="none"/><path d="M6.1 5.5L11.5 10.3" stroke="#fff" stroke-width="0.7" fill="none"/><circle cx="3.5" cy="3.5" r="2.85" fill="#c9c9c9" stroke="#1a1a1a" stroke-width="0.95"/></svg>
<span class="t" style="left:793.20px;top:178.00px;letter-spacing:-0.594px;">Id</span>
<span class="t" style="left:782.80px;top:191.00px;letter-spacing:-0.296px;">panier</span>
<svg style="left:880.8px;top:184.3px" width="11.6" height="12" viewBox="0 0 11.6 12"><path d="M5.3 5.2L11.4 10.6" stroke="#000090" stroke-width="2.4" fill="none"/><path d="M6.1 5.5L11.5 10.3" stroke="#fff" stroke-width="0.7" fill="none"/><circle cx="3.5" cy="3.5" r="2.85" fill="#c9c9c9" stroke="#1a1a1a" stroke-width="0.95"/></svg>
<span class="t" style="left:829.85px;top:178.00px;letter-spacing:-0.308px;">Id adresse</span>
<span class="t" style="left:847.05px;top:191.00px;letter-spacing:0.315px;">liv.</span>
<svg style="left:946.3px;top:184.3px" width="11.6" height="12" viewBox="0 0 11.6 12"><path d="M5.3 5.2L11.4 10.6" stroke="#000090" stroke-width="2.4" fill="none"/><path d="M6.1 5.5L11.5 10.3" stroke="#fff" stroke-width="0.7" fill="none"/><circle cx="3.5" cy="3.5" r="2.85" fill="#c9c9c9" stroke="#1a1a1a" stroke-width="0.95"/></svg>
<span class="t" style="left:898.00px;top:178.00px;letter-spacing:-0.338px;">Id adresse</span>
<span class="t" style="left:911.25px;top:191.00px;letter-spacing:0.141px;">fact.</span>
<svg style="left:1008px;top:185.2px" width="10" height="10.4" viewBox="0 0 10 10.4"><path d="M0 0.1H9.8L6.5 4.5V8.4L4.7 10.2L3.5 9.4V4.5Z" fill="url(#fun)"/><path d="M6.5 4.5V8.4L4.7 10.2V5.2Z" fill="#0a1f5c" fill-opacity="0.55"/><path d="M0.9 0.7H6.4" stroke="#9fd8ff" stroke-width="0.8" fill="none"/></svg>
<span class="t" style="left:979.75px;top:184.00px;letter-spacing:-0.605px;">Clé</span>
<svg style="left:1088.5px;top:185.2px" width="10" height="10.4" viewBox="0 0 10 10.4"><path d="M0 0.1H9.8L6.5 4.5V8.4L4.7 10.2L3.5 9.4V4.5Z" fill="url(#fun)"/><path d="M6.5 4.5V8.4L4.7 10.2V5.2Z" fill="#0a1f5c" fill-opacity="0.55"/><path d="M0.9 0.7H6.4" stroke="#9fd8ff" stroke-width="0.8" fill="none"/></svg>
<span class="t" style="left:1036.30px;top:184.00px;letter-spacing:-0.486px;">Paiement</span>
<svg style="left:1130.6px;top:184.3px" width="11.6" height="12" viewBox="0 0 11.6 12"><path d="M5.3 5.2L11.4 10.6" stroke="#000090" stroke-width="2.4" fill="none"/><path d="M6.1 5.5L11.5 10.3" stroke="#fff" stroke-width="0.7" fill="none"/><circle cx="3.5" cy="3.5" r="2.85" fill="#c9c9c9" stroke="#1a1a1a" stroke-width="0.95"/></svg>
<span class="t" style="left:1111.20px;top:178.00px;letter-spacing:-0.594px;">Id</span>
<span class="t" style="left:1100.15px;top:191.00px;letter-spacing:-0.283px;">devise</span>
<svg style="left:1180.6px;top:185.2px" width="10" height="10.4" viewBox="0 0 10 10.4"><path d="M0 0.1H9.8L6.5 4.5V8.4L4.7 10.2L3.5 9.4V4.5Z" fill="url(#fun)"/><path d="M6.5 4.5V8.4L4.7 10.2V5.2Z" fill="#0a1f5c" fill-opacity="0.55"/><path d="M0.9 0.7H6.4" stroke="#9fd8ff" stroke-width="0.8" fill="none"/></svg>
<span class="t" style="left:1147.55px;top:184.00px;letter-spacing:-0.421px;">Devise</span>
<svg style="left:1243.8px;top:184.3px" width="11.6" height="12" viewBox="0 0 11.6 12"><path d="M5.3 5.2L11.4 10.6" stroke="#000090" stroke-width="2.4" fill="none"/><path d="M6.1 5.5L11.5 10.3" stroke="#fff" stroke-width="0.7" fill="none"/><circle cx="3.5" cy="3.5" r="2.85" fill="#c9c9c9" stroke="#1a1a1a" stroke-width="0.95"/></svg>
<span class="t" style="left:1203.35px;top:178.00px;letter-spacing:-0.176px;">Taux de</span>
<span class="t" style="left:1204.30px;top:191.00px;letter-spacing:-0.116px;">change</span>
<svg style="left:1298.9px;top:185.2px" width="10" height="10.4" viewBox="0 0 10 10.4"><path d="M0 0.1H9.8L6.5 4.5V8.4L4.7 10.2L3.5 9.4V4.5Z" fill="url(#fun)"/><path d="M6.5 4.5V8.4L4.7 10.2V5.2Z" fill="#0a1f5c" fill-opacity="0.55"/><path d="M0.9 0.7H6.4" stroke="#9fd8ff" stroke-width="0.8" fill="none"/></svg>
<span class="t" style="left:1263.40px;top:184.00px;letter-spacing:-0.413px;">Module</span>
<span class="t" style="left:1330.45px;top:178.00px;letter-spacing:-1.147px;">Emb.</span>
<span class="t" style="left:1317.00px;top:191.00px;letter-spacing:-0.153px;">recyclable</span>
<span class="t" style="left:1369.45px;top:184.00px;letter-spacing:-0.341px;">Cadeau</span>
<svg style="left:1456.8px;top:185.2px" width="10" height="10.4" viewBox="0 0 10 10.4"><path d="M0 0.1H9.8L6.5 4.5V8.4L4.7 10.2L3.5 9.4V4.5Z" fill="url(#fun)"/><path d="M6.5 4.5V8.4L4.7 10.2V5.2Z" fill="#0a1f5c" fill-opacity="0.55"/><path d="M0.9 0.7H6.4" stroke="#9fd8ff" stroke-width="0.8" fill="none"/></svg>
<span class="t" style="left:1413.20px;top:178.00px;letter-spacing:-0.377px;">Message</span>
<span class="t" style="left:1416.75px;top:191.00px;letter-spacing:-0.199px;">cadeau</span>
<div style="left:1470px;top:178.00px;width:61px;height:13px;overflow:hidden"><span class="t" style="left:16.45px;top:0;letter-spacing:-0.571px;">Numéro</span></div>
<div style="left:1470px;top:191.00px;width:61px;height:13px;overflow:hidden"><span class="t" style="left:5.80px;top:0;letter-spacing:-0.115px;">d&#x27;expédition</span></div>
<svg style="left:1531.6px;top:183px" width="9.6" height="11.6" viewBox="0 0 11 12.4"><rect x="0.2" y="0.3" width="8.6" height="2.6" fill="#15155e"/><rect x="0.8" y="1.1" width="5" height="1" fill="#7c86e6"/><rect x="3" y="3.4" width="7.2" height="8.4" fill="#b4bcff" stroke="#0a0a52" stroke-width="1.2"/><path d="M4.8 5.6H8.4M4.8 7.5H8.4M4.8 9.4H8.4" stroke="#2a2aa8" stroke-width="0.9"/></svg>
<svg style="left:87px;top:206px" width="13" height="13" viewBox="0 0 13 13"><rect x="0.5" y="0.5" width="12" height="12" fill="#f4f4f4" stroke="#5d86cf"/><rect x="2" y="2" width="9" height="9" fill="url(#cbg)"/><rect x="2.5" y="2.5" width="8" height="8" fill="none" stroke="#bcbcbc" stroke-opacity="0.55"/><path d="M3.2 6.4L5.4 9.2L9.8 3.2" fill="none" stroke="#31408c" stroke-width="1.9" stroke-linecap="butt" stroke-linejoin="miter"/></svg>
<div style="left:103px;top:207.00px;width:92px;height:13px;overflow:hidden"><span class="t" style="left:0.80px;top:0;letter-spacing:0.122px;color:#fff;">__/__/0000 __:__</span></div>
<span class="t" style="left:240.28px;top:207.00px;letter-spacing:0.000px;color:#fff;">1</span>
<span class="t" style="left:370.27px;top:207.00px;letter-spacing:0.000px;color:#fff;">2</span>
<span class="t" style="left:413.27px;top:207.00px;letter-spacing:0.000px;color:#fff;">2</span>
<span class="t" style="left:468.27px;top:207.00px;letter-spacing:0.000px;color:#fff;">1</span>
<div style="left:480px;top:207.00px;width:58px;height:13px;overflow:hidden"><span class="t" style="left:0.80px;top:0;letter-spacing:-0.615px;color:#fff;">DOE</span></div>
<div style="left:539px;top:207.00px;width:63px;height:13px;overflow:hidden"><span class="t" style="left:1.80px;top:0;letter-spacing:-0.288px;color:#fff;">JOHN</span></div>
<div style="left:603px;top:207.00px;width:59px;height:13px;overflow:hidden"><span class="t" style="left:0.80px;top:0;letter-spacing:-0.356px;color:#fff;">My Company</span></div>
<div style="left:663px;top:207.00px;width:115px;height:13px;overflow:hidden"><span class="t" style="left:0.80px;top:0;letter-spacing:-0.266px;color:#fff;">pub@prestashop.com</span></div>
<span class="t" style="left:816.27px;top:207.00px;letter-spacing:0.000px;color:#fff;">1</span>
<span class="t" style="left:881.27px;top:207.00px;letter-spacing:0.000px;color:#fff;">2</span>
<span class="t" style="left:947.27px;top:207.00px;letter-spacing:0.000px;color:#fff;">2</span>
<div style="left:959px;top:207.00px;width:59px;height:13px;overflow:hidden"><span class="t" style="left:0.80px;top:0;letter-spacing:0.055px;color:#fff;">47ce86627c</span></div>
<div style="left:1019px;top:207.00px;width:80px;height:13px;overflow:hidden"><span class="t" style="left:0.80px;top:0;letter-spacing:-0.358px;color:#fff;">Chèque</span></div>
<span class="t" style="left:1131.28px;top:207.00px;letter-spacing:0.000px;color:#fff;">1</span>
<div style="left:1143px;top:207.00px;width:48px;height:13px;overflow:hidden"><span class="t" style="left:0.80px;top:0;letter-spacing:-0.245px;color:#fff;">EUR</span></div>
<span class="t" style="left:1206.20px;top:207.00px;letter-spacing:-0.211px;color:#fff;">1.000000</span>
<div style="left:1256px;top:207.00px;width:53px;height:13px;overflow:hidden"><span class="t" style="left:0.80px;top:0;letter-spacing:-0.182px;color:#fff;">cheque</span></div>
<svg style="left:1351px;top:206px" width="13" height="13" viewBox="0 0 13 13"><rect x="0.5" y="0.5" width="12" height="12" fill="#f4f4f4" stroke="#5d86cf"/><rect x="2" y="2" width="9" height="9" fill="url(#cbg)"/><rect x="2.5" y="2.5" width="8" height="8" fill="none" stroke="#bcbcbc" stroke-opacity="0.55"/></svg>
<svg style="left:1392px;top:206px" width="13" height="13" viewBox="0 0 13 13"><rect x="0.5" y="0.5" width="12" height="12" fill="#f4f4f4" stroke="#5d86cf"/><rect x="2" y="2" width="9" height="9" fill="url(#cbg)"/><rect x="2.5" y="2.5" width="8" height="8" fill="none" stroke="#bcbcbc" stroke-opacity="0.55"/></svg>
<svg style="left:87px;top:224px" width="13" height="13" viewBox="0 0 13 13"><rect x="0.5" y="0.5" width="12" height="12" fill="#f4f4f4" stroke="#8e8f8f"/><rect x="2" y="2" width="9" height="9" fill="url(#cbg)"/><rect x="2.5" y="2.5" width="8" height="8" fill="none" stroke="#bcbcbc" stroke-opacity="0.55"/></svg>
<div style="left:103px;top:225.00px;width:92px;height:13px;overflow:hidden"><span class="t" style="left:0.80px;top:0;letter-spacing:0.122px;">21/09/2012 09:55</span></div>
<span class="t" style="left:240.28px;top:225.00px;letter-spacing:0.000px;">2</span>
<span class="t" style="left:298.27px;top:225.00px;letter-spacing:0.000px;">1</span>
<span class="t" style="left:370.27px;top:225.00px;letter-spacing:0.000px;">2</span>
<span class="t" style="left:413.27px;top:225.00px;letter-spacing:0.000px;">1</span>
<span class="t" style="left:468.27px;top:225.00px;letter-spacing:0.000px;">2</span>
<div style="left:480px;top:225.00px;width:58px;height:13px;overflow:hidden"><span class="t" style="left:1.80px;top:0;letter-spacing:-0.581px;">TEST</span></div>
<div style="left:539px;top:225.00px;width:63px;height:13px;overflow:hidden"><span class="t" style="left:1.80px;top:0;letter-spacing:-0.581px;">TEST</span></div>
<div style="left:663px;top:225.00px;width:115px;height:13px;overflow:hidden"><span class="t" style="left:0.80px;top:0;letter-spacing:-0.304px;">test@test.mail</span></div>
<span class="t" style="left:816.27px;top:225.00px;letter-spacing:0.000px;">2</span>
<span class="t" style="left:881.27px;top:225.00px;letter-spacing:0.000px;">3</span>
<span class="t" style="left:947.27px;top:225.00px;letter-spacing:0.000px;">3</span>
<div style="left:959px;top:225.00px;width:59px;height:13px;overflow:hidden"><span class="t" style="left:0.80px;top:0;letter-spacing:-0.067px;">745ec6fcdc</span></div>
<div style="left:1019px;top:225.00px;width:80px;height:13px;overflow:hidden"><span class="t" style="left:0.80px;top:0;letter-spacing:-0.138px;">Check</span></div>
<span class="t" style="left:1131.28px;top:225.00px;letter-spacing:0.000px;">1</span>
<div style="left:1143px;top:225.00px;width:48px;height:13px;overflow:hidden"><span class="t" style="left:0.80px;top:0;letter-spacing:-0.245px;">EUR</span></div>
<span class="t" style="left:1206.20px;top:225.00px;letter-spacing:-0.211px;">1.000000</span>
<div style="left:1256px;top:225.00px;width:53px;height:13px;overflow:hidden"><span class="t" style="left:0.80px;top:0;letter-spacing:-0.182px;">cheque</span></div>
<svg style="left:1351px;top:224px" width="13" height="13" viewBox="0 0 13 13"><rect x="0.5" y="0.5" width="12" height="12" fill="#f4f4f4" stroke="#8e8f8f"/><rect x="2" y="2" width="9" height="9" fill="url(#cbg)"/><rect x="2.5" y="2.5" width="8" height="8" fill="none" stroke="#bcbcbc" stroke-opacity="0.55"/><path d="M3.2 6.4L5.4 9.2L9.8 3.2" fill="none" stroke="#31408c" stroke-width="1.9" stroke-linecap="butt" stroke-linejoin="miter"/></svg>
<svg style="left:1392px;top:224px" width="13" height="13" viewBox="0 0 13 13"><rect x="0.5" y="0.5" width="12" height="12" fill="#f4f4f4" stroke="#8e8f8f"/><rect x="2" y="2" width="9" height="9" fill="url(#cbg)"/><rect x="2.5" y="2.5" width="8" height="8" fill="none" stroke="#bcbcbc" stroke-opacity="0.55"/></svg>
<svg style="left:87px;top:242px" width="13" height="13" viewBox="0 0 13 13"><rect x="0.5" y="0.5" width="12" height="12" fill="#f4f4f4" stroke="#8e8f8f"/><rect x="2" y="2" width="9" height="9" fill="url(#cbg)"/><rect x="2.5" y="2.5" width="8" height="8" fill="none" stroke="#bcbcbc" stroke-opacity="0.55"/></svg>
<div style="left:103px;top:243.00px;width:92px;height:13px;overflow:hidden"><span class="t" style="left:0.80px;top:0;letter-spacing:0.122px;">21/09/2012 10:04</span></div>
<span class="t" style="left:240.28px;top:243.00px;letter-spacing:0.000px;">3</span>
<span class="t" style="left:298.27px;top:243.00px;letter-spacing:0.000px;">2</span>
<span class="t" style="left:413.27px;top:243.00px;letter-spacing:0.000px;">1</span>
<span class="t" style="left:468.27px;top:243.00px;letter-spacing:0.000px;">2</span>
<div style="left:480px;top:243.00px;width:58px;height:13px;overflow:hidden"><span class="t" style="left:1.80px;top:0;letter-spacing:-0.581px;">TEST</span></div>
<div style="left:539px;top:243.00px;width:63px;height:13px;overflow:hidden"><span class="t" style="left:1.80px;top:0;letter-spacing:-0.581px;">TEST</span></div>
<div style="left:663px;top:243.00px;width:115px;height:13px;overflow:hidden"><span class="t" style="left:0.80px;top:0;letter-spacing:-0.304px;">test@test.mail</span></div>
<span class="t" style="left:816.27px;top:243.00px;letter-spacing:0.000px;">3</span>
<span class="t" style="left:881.27px;top:243.00px;letter-spacing:0.000px;">3</span>
<span class="t" style="left:947.27px;top:243.00px;letter-spacing:0.000px;">3</span>
<div style="left:959px;top:243.00px;width:59px;height:13px;overflow:hidden"><span class="t" style="left:0.80px;top:0;letter-spacing:-0.067px;">745ec6fcdc</span></div>
<div style="left:1019px;top:243.00px;width:80px;height:13px;overflow:hidden"><span class="t" style="left:0.80px;top:0;letter-spacing:-0.336px;">Free order</span></div>
<span class="t" style="left:1131.28px;top:243.00px;letter-spacing:0.000px;">1</span>
<div style="left:1143px;top:243.00px;width:48px;height:13px;overflow:hidden"><span class="t" style="left:0.80px;top:0;letter-spacing:-0.245px;">EUR</span></div>
<span class="t" style="left:1206.20px;top:243.00px;letter-spacing:-0.211px;">1.000000</span>
<svg style="left:1351px;top:242px" width="13" height="13" viewBox="0 0 13 13"><rect x="0.5" y="0.5" width="12" height="12" fill="#f4f4f4" stroke="#8e8f8f"/><rect x="2" y="2" width="9" height="9" fill="url(#cbg)"/><rect x="2.5" y="2.5" width="8" height="8" fill="none" stroke="#bcbcbc" stroke-opacity="0.55"/></svg>
<svg style="left:1392px;top:242px" width="13" height="13" viewBox="0 0 13 13"><rect x="0.5" y="0.5" width="12" height="12" fill="#f4f4f4" stroke="#8e8f8f"/><rect x="2" y="2" width="9" height="9" fill="url(#cbg)"/><rect x="2.5" y="2.5" width="8" height="8" fill="none" stroke="#bcbcbc" stroke-opacity="0.55"/></svg>
<svg style="left:87px;top:260px" width="13" height="13" viewBox="0 0 13 13"><rect x="0.5" y="0.5" width="12" height="12" fill="#f4f4f4" stroke="#8e8f8f"/><rect x="2" y="2" width="9" height="9" fill="url(#cbg)"/><rect x="2.5" y="2.5" width="8" height="8" fill="none" stroke="#bcbcbc" stroke-opacity="0.55"/></svg>
<div style="left:103px;top:261.00px;width:92px;height:13px;overflow:hidden"><span class="t" style="left:0.80px;top:0;letter-spacing:0.122px;">21/09/2012 10:09</span></div>
<span class="t" style="left:240.28px;top:261.00px;letter-spacing:0.000px;">4</span>
<span class="t" style="left:298.27px;top:261.00px;letter-spacing:0.000px;">3</span>
<span class="t" style="left:370.27px;top:261.00px;letter-spacing:0.000px;">2</span>
<span class="t" style="left:413.27px;top:261.00px;letter-spacing:0.000px;">1</span>
<span class="t" style="left:468.27px;top:261.00px;letter-spacing:0.000px;">2</span>
<div style="left:480px;top:261.00px;width:58px;height:13px;overflow:hidden"><span class="t" style="left:1.80px;top:0;letter-spacing:-0.581px;">TEST</span></div>
<div style="left:539px;top:261.00px;width:63px;height:13px;overflow:hidden"><span class="t" style="left:1.80px;top:0;letter-spacing:-0.581px;">TEST</span></div>
<div style="left:663px;top:261.00px;width:115px;height:13px;overflow:hidden"><span class="t" style="left:0.80px;top:0;letter-spacing:-0.304px;">test@test.mail</span></div>
<span class="t" style="left:816.27px;top:261.00px;letter-spacing:0.000px;">4</span>
<span class="t" style="left:881.27px;top:261.00px;letter-spacing:0.000px;">3</span>
<span class="t" style="left:947.27px;top:261.00px;letter-spacing:0.000px;">3</span>
<div style="left:959px;top:261.00px;width:59px;height:13px;overflow:hidden"><span class="t" style="left:0.80px;top:0;letter-spacing:-0.067px;">745ec6fcdc</span></div>
<div style="left:1019px;top:261.00px;width:80px;height:13px;overflow:hidden"><span class="t" style="left:0.80px;top:0;letter-spacing:-0.138px;">Check</span></div>
<span class="t" style="left:1131.28px;top:261.00px;letter-spacing:0.000px;">1</span>
<div style="left:1143px;top:261.00px;width:48px;height:13px;overflow:hidden"><span class="t" style="left:0.80px;top:0;letter-spacing:-0.245px;">EUR</span></div>
<span class="t" style="left:1206.20px;top:261.00px;letter-spacing:-0.211px;">1.000000</span>
<div style="left:1256px;top:261.00px;width:53px;height:13px;overflow:hidden"><span class="t" style="left:0.80px;top:0;letter-spacing:-0.182px;">cheque</span></div>
<svg style="left:1351px;top:260px" width="13" height="13" viewBox="0 0 13 13"><rect x="0.5" y="0.5" width="12" height="12" fill="#f4f4f4" stroke="#8e8f8f"/><rect x="2" y="2" width="9" height="9" fill="url(#cbg)"/><rect x="2.5" y="2.5" width="8" height="8" fill="none" stroke="#bcbcbc" stroke-opacity="0.55"/></svg>
<svg style="left:1392px;top:260px" width="13" height="13" viewBox="0 0 13 13"><rect x="0.5" y="0.5" width="12" height="12" fill="#f4f4f4" stroke="#8e8f8f"/><rect x="2" y="2" width="9" height="9" fill="url(#cbg)"/><rect x="2.5" y="2.5" width="8" height="8" fill="none" stroke="#bcbcbc" stroke-opacity="0.55"/></svg>
<div style="left:1531px;top:203px;width:14px;height:424px;background:linear-gradient(90deg,#e6e6e6,#f2f2f2 60%,#f0f0f0)"></div>
<svg style="left:1533.6px;top:208px" width="10" height="10" viewBox="0 0 10 10"><path d="M1.4 7L5 3L8.6 7Z" fill="#8a8a8a"/></svg>
<svg style="left:1533.8px;top:613.8px" width="10" height="10" viewBox="0 0 10 10"><path d="M1.4 3L5 7L8.6 3Z" fill="#8a8a8a"/></svg>
<div style="left:48px;top:627px;width:55px;height:14px;background:#c3d3f7"></div>
<div style="left:103px;top:627px;width:1428px;height:14px;background:linear-gradient(#e9e9e9,#f1f1f1 40%,#eeeeee)"></div>
<div style="left:1531px;top:627px;width:14px;height:14px;background:#c3d3f7"></div>
<svg style="left:106px;top:629px" width="10" height="10" viewBox="0 0 10 10"><path d="M7 1.4L3 5L7 8.6Z" fill="#3c3c3c"/></svg>
<svg style="left:1517.4px;top:629px" width="10" height="10" viewBox="0 0 10 10"><path d="M3 1.4L7 5L3 8.6Z" fill="#3c3c3c"/></svg>
<div style="left:121px;top:628px;width:775px;height:12px;background:linear-gradient(#f4f4f4 0%,#e6e6e6 40%,#d2d2d2 60%,#c4c4c4 100%);border:1px solid #8e8e8e;border-radius:2px;box-shadow:inset 0 0 0 1px rgba(255,255,255,.6)"></div>
<div style="left:503.8px;top:631px;width:1.3px;height:6.5px;background:#3e3e3e"></div>
<div style="left:505.1px;top:631px;width:1px;height:6.5px;background:#f8f8f8"></div>
<div style="left:506.8px;top:631px;width:1.3px;height:6.5px;background:#3e3e3e"></div>
<div style="left:508.1px;top:631px;width:1px;height:6.5px;background:#f8f8f8"></div>
<div style="left:509.8px;top:631px;width:1.3px;height:6.5px;background:#3e3e3e"></div>
<div style="left:511.1px;top:631px;width:1px;height:6.5px;background:#f8f8f8"></div>
<span class="t" style="left:48.30px;top:645.00px;letter-spacing:-0.841px;">Somme</span>
<div style="left:14px;top:667px;width:1538px;height:1px;background:#8e8e8e"></div>
<div style="left:14px;top:668px;width:1538px;height:1px;background:#606060"></div>
<div style="left:1550.6px;top:664.6px;width:1.4px;height:3.4px;background:#8e8e8e"></div>
<div style="left:19px;top:674px;width:24px;height:21px;background:linear-gradient(#ffffff,#f4f8fd);border:1.5px solid #1b3f66;border-radius:2.6px;overflow:hidden"></div>
<svg style="left:21px;top:675px" width="20.8" height="18.8" viewBox="0 0 20.8 18.8"><defs><linearGradient id="bl1" x1="0" y1="0" x2="1" y2="1"><stop offset="0" stop-color="#6ec6f4"/><stop offset="0.6" stop-color="#2f97df"/><stop offset="1" stop-color="#1672c4"/></linearGradient><linearGradient id="rd1" x1="0" y1="0" x2="1" y2="0.8"><stop offset="0" stop-color="#f02418"/><stop offset="0.55" stop-color="#dc1408"/><stop offset="1" stop-color="#8e0804"/></linearGradient></defs><path d="M11.6 4.6H15.7V10.9H13.7V6.2H11.6Z" fill="#858da6"/><path d="M2.3 7.8H4.2V11.4H2.3Z" fill="#9aa2ba"/><path d="M10.2 12Q15 10.2 20.8 10.6V18.8H10.5Z" fill="url(#bl1)"/><path d="M0.4 11.8Q4 10.2 7.7 11.4L7.9 13.6Q4.6 16 0.9 15.2Z" fill="url(#bl1)"/><path d="M0.9 15.2Q4.6 16 7.9 13.6L7.6 14.8Q4.4 16.6 1.4 16Z" fill="#0f62b4"/><path d="M7 0.1L12.5 4.9L6.5 11.8L2 6.5Z" fill="url(#rd1)"/><path d="M7 0.1L8.6 1.5L3.4 8L2 6.5Z" fill="#ff5a48" fill-opacity="0.55"/></svg>
<div style="left:47px;top:673px;width:1499px;height:387px;background:#fff;border:1px solid #a3a3a3"></div>
<div style="left:48px;top:740px;width:1483px;height:18px;background:#f0f6fd"></div>
<div style="left:48px;top:776px;width:1483px;height:18px;background:#f0f6fd"></div>
<div style="left:48px;top:812px;width:1483px;height:18px;background:#f0f6fd"></div>
<div style="left:48px;top:848px;width:1483px;height:18px;background:#f0f6fd"></div>
<div style="left:48px;top:884px;width:1483px;height:18px;background:#f0f6fd"></div>
<div style="left:48px;top:920px;width:1483px;height:18px;background:#f0f6fd"></div>
<div style="left:48px;top:956px;width:1483px;height:18px;background:#f0f6fd"></div>
<div style="left:48px;top:992px;width:1483px;height:18px;background:#f0f6fd"></div>
<div style="left:48px;top:674px;width:1497px;height:34px;background:linear-gradient(#fefefd 0%,#f7f6f0 35%,#efede2 70%,#e8e5d5 100%);border-bottom:1px solid #8e8c82"></div>
<div style="left:99px;top:674px;width:1px;height:34px;background:#a09e94"></div>
<div style="left:100px;top:674px;width:1px;height:33px;background:rgba(255,255,255,.7)"></div>
<div style="left:99px;top:722px;width:1px;height:304px;background:#dadce1"></div>
<div style="left:199px;top:674px;width:1px;height:34px;background:#a09e94"></div>
<div style="left:200px;top:674px;width:1px;height:33px;background:rgba(255,255,255,.7)"></div>
<div style="left:199px;top:722px;width:1px;height:304px;background:#dadce1"></div>
<div style="left:299px;top:674px;width:1px;height:34px;background:#a09e94"></div>
<div style="left:300px;top:674px;width:1px;height:33px;background:rgba(255,255,255,.7)"></div>
<div style="left:299px;top:722px;width:1px;height:304px;background:#dadce1"></div>
<div style="left:619px;top:674px;width:1px;height:34px;background:#a09e94"></div>
<div style="left:620px;top:674px;width:1px;height:33px;background:rgba(255,255,255,.7)"></div>
<div style="left:619px;top:722px;width:1px;height:304px;background:#dadce1"></div>
<div style="left:665px;top:674px;width:1px;height:34px;background:#a09e94"></div>
<div style="left:666px;top:674px;width:1px;height:33px;background:rgba(255,255,255,.7)"></div>
<div style="left:665px;top:722px;width:1px;height:304px;background:#dadce1"></div>
<div style="left:841px;top:674px;width:1px;height:34px;background:#a09e94"></div>
<div style="left:842px;top:674px;width:1px;height:33px;background:rgba(255,255,255,.7)"></div>
<div style="left:841px;top:722px;width:1px;height:304px;background:#dadce1"></div>
<div style="left:894px;top:674px;width:1px;height:34px;background:#a09e94"></div>
<div style="left:895px;top:674px;width:1px;height:33px;background:rgba(255,255,255,.7)"></div>
<div style="left:894px;top:722px;width:1px;height:304px;background:#dadce1"></div>
<div style="left:1104px;top:674px;width:1px;height:34px;background:#a09e94"></div>
<div style="left:1105px;top:674px;width:1px;height:33px;background:rgba(255,255,255,.7)"></div>
<div style="left:1104px;top:722px;width:1px;height:304px;background:#dadce1"></div>
<div style="left:1169px;top:674px;width:1px;height:34px;background:#a09e94"></div>
<div style="left:1170px;top:674px;width:1px;height:33px;background:rgba(255,255,255,.7)"></div>
<div style="left:1169px;top:722px;width:1px;height:304px;background:#dadce1"></div>
<div style="left:1257px;top:674px;width:1px;height:34px;background:#a09e94"></div>
<div style="left:1258px;top:674px;width:1px;height:33px;background:rgba(255,255,255,.7)"></div>
<div style="left:1257px;top:722px;width:1px;height:304px;background:#dadce1"></div>
<div style="left:1352px;top:674px;width:1px;height:34px;background:#a09e94"></div>
<div style="left:1353px;top:674px;width:1px;height:33px;background:rgba(255,255,255,.7)"></div>
<div style="left:1352px;top:722px;width:1px;height:304px;background:#dadce1"></div>
<div style="left:1457px;top:674px;width:1px;height:34px;background:#a09e94"></div>
<div style="left:1458px;top:674px;width:1px;height:33px;background:rgba(255,255,255,.7)"></div>
<div style="left:1457px;top:722px;width:1px;height:304px;background:#dadce1"></div>
<svg style="left:48px;top:674px" width="6" height="8" viewBox="0 0 6 8"><path d="M2.7 0.3L5.4 3H0Z M0 4.3H5.4L2.7 7Z" fill="#000"/></svg>
<svg style="left:100px;top:674px" width="6" height="8" viewBox="0 0 6 8"><path d="M2.7 0.3L5.4 3H0Z M0 4.3H5.4L2.7 7Z" fill="#000"/></svg>
<svg style="left:200px;top:674px" width="6" height="8" viewBox="0 0 6 8"><path d="M2.7 0.3L5.4 3H0Z M0 4.3H5.4L2.7 7Z" fill="#000"/></svg>
<svg style="left:300px;top:674px" width="6" height="8" viewBox="0 0 6 8"><path d="M2.7 0.3L5.4 3H0Z M0 4.3H5.4L2.7 7Z" fill="#000"/></svg>
<svg style="left:620px;top:674px" width="6" height="8" viewBox="0 0 6 8"><path d="M2.7 0.3L5.4 3H0Z M0 4.3H5.4L2.7 7Z" fill="#000"/></svg>
<svg style="left:666px;top:674px" width="6" height="8" viewBox="0 0 6 8"><path d="M2.7 0.3L5.4 3H0Z M0 4.3H5.4L2.7 7Z" fill="#000"/></svg>
<svg style="left:842px;top:674px" width="6" height="8" viewBox="0 0 6 8"><path d="M2.7 0.3L5.4 3H0Z M0 4.3H5.4L2.7 7Z" fill="#000"/></svg>
<svg style="left:895px;top:674px" width="6" height="8" viewBox="0 0 6 8"><path d="M2.7 0.3L5.4 3H0Z M0 4.3H5.4L2.7 7Z" fill="#000"/></svg>
<svg style="left:1105px;top:674px" width="6" height="8" viewBox="0 0 6 8"><path d="M2.7 0.3L5.4 3H0Z M0 4.3H5.4L2.7 7Z" fill="#000"/></svg>
<svg style="left:1170px;top:674px" width="6" height="8" viewBox="0 0 6 8"><path d="M2.7 0.3L5.4 3H0Z M0 4.3H5.4L2.7 7Z" fill="#000"/></svg>
<svg style="left:1258px;top:674px" width="6" height="8" viewBox="0 0 6 8"><path d="M2.7 0.3L5.4 3H0Z M0 4.3H5.4L2.7 7Z" fill="#000"/></svg>
<svg style="left:1353px;top:674px" width="6" height="8" viewBox="0 0 6 8"><path d="M2.7 0.3L5.4 3H0Z M0 4.3H5.4L2.7 7Z" fill="#000"/></svg>
<svg style="left:1458px;top:674px" width="6" height="8" viewBox="0 0 6 8"><path d="M2.7 0.3L5.4 3H0Z M0 4.3H5.4L2.7 7Z" fill="#000"/></svg>
<div style="left:1169px;top:1038px;width:1px;height:21px;background:#dcdcdc"></div>
<div style="left:1257px;top:1038px;width:1px;height:21px;background:#dcdcdc"></div>
<div style="left:1352px;top:1038px;width:1px;height:21px;background:#dcdcdc"></div>
<div style="left:1457px;top:1038px;width:1px;height:21px;background:#dcdcdc"></div>
<div style="left:48px;top:708px;width:1483px;height:14px;background:linear-gradient(90deg,#ffce0a 0%,#ffd21a 30%,#ffe34a 60%,#fff870 100%)"></div>
<div style="left:54px;top:710px;width:9px;height:9px;background:#fff;border:1px solid #8c8c8c"></div>
<div style="left:56px;top:714px;width:5px;height:1.2px;background:#000"></div>
<span class="t" style="left:66.70px;top:710.00px;letter-spacing:-0.436px;">Commande:</span>
<span class="t" style="left:132.60px;top:710.00px;letter-spacing:0.000px;">1</span>
<svg style="left:87.4px;top:684.7px" width="11.6" height="12" viewBox="0 0 11.6 12"><path d="M5.3 5.2L11.4 10.6" stroke="#000090" stroke-width="2.4" fill="none"/><path d="M6.1 5.5L11.5 10.3" stroke="#fff" stroke-width="0.7" fill="none"/><circle cx="3.5" cy="3.5" r="2.85" fill="#c9c9c9" stroke="#1a1a1a" stroke-width="0.95"/></svg>
<span class="t" style="left:57.35px;top:685.00px;letter-spacing:-0.701px;">IdCmd</span>
<span class="t" style="left:140.95px;top:685.00px;letter-spacing:-0.198px;">Id Pr.</span>
<svg style="left:287.6px;top:684.7px" width="11.6" height="12" viewBox="0 0 11.6 12"><path d="M5.3 5.2L11.4 10.6" stroke="#000090" stroke-width="2.4" fill="none"/><path d="M6.1 5.5L11.5 10.3" stroke="#fff" stroke-width="0.7" fill="none"/><circle cx="3.5" cy="3.5" r="2.85" fill="#c9c9c9" stroke="#1a1a1a" stroke-width="0.95"/></svg>
<span class="t" style="left:232.00px;top:685.00px;letter-spacing:-0.346px;">Id PrAt</span>
<svg style="left:608.4px;top:685.6px" width="10" height="10.4" viewBox="0 0 10 10.4"><path d="M0 0.1H9.8L6.5 4.5V8.4L4.7 10.2L3.5 9.4V4.5Z" fill="url(#fun)"/><path d="M6.5 4.5V8.4L4.7 10.2V5.2Z" fill="#0a1f5c" fill-opacity="0.55"/><path d="M0.9 0.7H6.4" stroke="#9fd8ff" stroke-width="0.8" fill="none"/></svg>
<span class="t" style="left:406.35px;top:685.00px;letter-spacing:-0.187px;">Nom du/des produit(s)</span>
<svg style="left:653.9px;top:684.7px" width="11.6" height="12" viewBox="0 0 11.6 12"><path d="M5.3 5.2L11.4 10.6" stroke="#000090" stroke-width="2.4" fill="none"/><path d="M6.1 5.5L11.5 10.3" stroke="#fff" stroke-width="0.7" fill="none"/><circle cx="3.5" cy="3.5" r="2.85" fill="#c9c9c9" stroke="#1a1a1a" stroke-width="0.95"/></svg>
<span class="t" style="left:623.00px;top:685.00px;letter-spacing:-0.315px;">Id Cat.</span>
<svg style="left:830.9px;top:685.6px" width="10" height="10.4" viewBox="0 0 10 10.4"><path d="M0 0.1H9.8L6.5 4.5V8.4L4.7 10.2L3.5 9.4V4.5Z" fill="url(#fun)"/><path d="M6.5 4.5V8.4L4.7 10.2V5.2Z" fill="#0a1f5c" fill-opacity="0.55"/><path d="M0.9 0.7H6.4" stroke="#9fd8ff" stroke-width="0.8" fill="none"/></svg>
<span class="t" style="left:742.80px;top:685.00px;letter-spacing:-0.447px;">Réf.</span>
<svg style="left:883.4px;top:685.6px" width="10" height="10.4" viewBox="0 0 10 10.4"><path d="M0 0.1H9.8L6.5 4.5V8.4L4.7 10.2L3.5 9.4V4.5Z" fill="url(#fun)"/><path d="M6.5 4.5V8.4L4.7 10.2V5.2Z" fill="#0a1f5c" fill-opacity="0.55"/><path d="M0.9 0.7H6.4" stroke="#9fd8ff" stroke-width="0.8" fill="none"/></svg>
<div style="left:842px;top:685.00px;width:41px;height:13px;overflow:hidden"><span class="t" style="left:-1.00px;top:0;letter-spacing:-0.406px;">Fourniss.</span></div>
<svg style="left:1093.8px;top:685.6px" width="10" height="10.4" viewBox="0 0 10 10.4"><path d="M0 0.1H9.8L6.5 4.5V8.4L4.7 10.2L3.5 9.4V4.5Z" fill="url(#fun)"/><path d="M6.5 4.5V8.4L4.7 10.2V5.2Z" fill="#0a1f5c" fill-opacity="0.55"/><path d="M0.9 0.7H6.4" stroke="#9fd8ff" stroke-width="0.8" fill="none"/></svg>
<span class="t" style="left:967.20px;top:685.00px;letter-spacing:-0.258px;">Réf. fourniss.</span>
<svg style="left:1157.2px;top:684.7px" width="11.6" height="12" viewBox="0 0 11.6 12"><path d="M5.3 5.2L11.4 10.6" stroke="#000090" stroke-width="2.4" fill="none"/><path d="M6.1 5.5L11.5 10.3" stroke="#fff" stroke-width="0.7" fill="none"/><circle cx="3.5" cy="3.5" r="2.85" fill="#c9c9c9" stroke="#1a1a1a" stroke-width="0.95"/></svg>
<span class="t" style="left:1119.40px;top:685.00px;letter-spacing:-0.172px;">Quant.</span>
<svg style="left:1245.2px;top:684.7px" width="11.6" height="12" viewBox="0 0 11.6 12"><path d="M5.3 5.2L11.4 10.6" stroke="#000090" stroke-width="2.4" fill="none"/><path d="M6.1 5.5L11.5 10.3" stroke="#fff" stroke-width="0.7" fill="none"/><circle cx="3.5" cy="3.5" r="2.85" fill="#c9c9c9" stroke="#1a1a1a" stroke-width="0.95"/></svg>
<span class="t" style="left:1198.00px;top:685.00px;letter-spacing:-0.023px;">Stock</span>
<svg style="left:1340.6px;top:684.7px" width="11.6" height="12" viewBox="0 0 11.6 12"><path d="M5.3 5.2L11.4 10.6" stroke="#000090" stroke-width="2.4" fill="none"/><path d="M6.1 5.5L11.5 10.3" stroke="#fff" stroke-width="0.7" fill="none"/><circle cx="3.5" cy="3.5" r="2.85" fill="#c9c9c9" stroke="#1a1a1a" stroke-width="0.95"/></svg>
<span class="t" style="left:1274.80px;top:678.00px;letter-spacing:-0.170px;">Quant. de</span>
<span class="t" style="left:1265.20px;top:691.00px;letter-spacing:-0.308px;">produits remb.</span>
<svg style="left:1445.4px;top:684.7px" width="11.6" height="12" viewBox="0 0 11.6 12"><path d="M5.3 5.2L11.4 10.6" stroke="#000090" stroke-width="2.4" fill="none"/><path d="M6.1 5.5L11.5 10.3" stroke="#fff" stroke-width="0.7" fill="none"/><circle cx="3.5" cy="3.5" r="2.85" fill="#c9c9c9" stroke="#1a1a1a" stroke-width="0.95"/></svg>
<span class="t" style="left:1358.35px;top:678.00px;letter-spacing:-0.201px;">Quant. de produits</span>
<span class="t" style="left:1379.80px;top:691.00px;letter-spacing:-0.276px;">retournés</span>
<div style="left:1458px;top:678.00px;width:73px;height:13px;overflow:hidden"><span class="t" style="left:17.30px;top:0;letter-spacing:-0.201px;">Quant. de produits</span></div>
<div style="left:1458px;top:691.00px;width:73px;height:13px;overflow:hidden"><span class="t" style="left:38.50px;top:0;letter-spacing:-0.208px;">réinjectés</span></div>
<svg style="left:1532.4px;top:683.3px" width="9.6" height="11.6" viewBox="0 0 11 12.4"><rect x="0.2" y="0.3" width="8.6" height="2.6" fill="#15155e"/><rect x="0.8" y="1.1" width="5" height="1" fill="#7c86e6"/><rect x="3" y="3.4" width="7.2" height="8.4" fill="#b4bcff" stroke="#0a0a52" stroke-width="1.2"/><path d="M4.8 5.6H8.4M4.8 7.5H8.4M4.8 9.4H8.4" stroke="#2a2aa8" stroke-width="0.9"/></svg>
<span class="t" style="left:90.38px;top:725.00px;letter-spacing:0.000px;">1</span>
<span class="t" style="left:191.38px;top:725.00px;letter-spacing:0.000px;">7</span>
<span class="t" style="left:284.25px;top:725.00px;letter-spacing:0.000px;">23</span>
<span class="t" style="left:300.80px;top:725.00px;letter-spacing:-0.185px;">iPod touch - Capacité: 32Go</span>
<span class="t" style="left:656.77px;top:725.00px;letter-spacing:0.000px;">2</span>
<span class="t" style="left:1158.38px;top:725.00px;letter-spacing:0.000px;">1</span>
<span class="t" style="left:1246.58px;top:725.00px;letter-spacing:0.000px;">0</span>
<span class="t" style="left:90.38px;top:743.00px;letter-spacing:0.000px;">1</span>
<span class="t" style="left:191.38px;top:743.00px;letter-spacing:0.000px;">9</span>
<span class="t" style="left:290.38px;top:743.00px;letter-spacing:0.000px;">0</span>
<span class="t" style="left:300.80px;top:743.00px;letter-spacing:-0.208px;">Écouteurs à isolation sonore Shure SE210</span>
<span class="t" style="left:656.77px;top:743.00px;letter-spacing:0.000px;">3</span>
<span class="t" style="left:842.80px;top:743.00px;letter-spacing:-0.304px;">SHURE O</span>
<span class="t" style="left:1158.38px;top:743.00px;letter-spacing:0.000px;">1</span>
<span class="t" style="left:1246.58px;top:743.00px;letter-spacing:0.000px;">0</span>
<div style="left:1531px;top:708px;width:14px;height:318px;background:linear-gradient(90deg,#e6e6e6,#f2f2f2 60%,#f0f0f0)"></div>
<svg style="left:1533.8px;top:711.6px" width="10" height="10" viewBox="0 0 10 10"><path d="M1.4 7L5 3L8.6 7Z" fill="#8a8a8a"/></svg>
<svg style="left:1533.8px;top:1012.6px" width="10" height="10" viewBox="0 0 10 10"><path d="M1.4 3L5 7L8.6 3Z" fill="#8a8a8a"/></svg>
<div style="left:48px;top:1026px;width:1483px;height:12px;background:linear-gradient(#e9e9e9,#f1f1f1 40%,#eeeeee)"></div>
<div style="left:1531px;top:1026px;width:14px;height:12px;background:#c3d3f7"></div>
<svg style="left:50.8px;top:1027px" width="10" height="10" viewBox="0 0 10 10"><path d="M7 1.4L3 5L7 8.6Z" fill="#3c3c3c"/></svg>
<svg style="left:1517.4px;top:1027px" width="10" height="10" viewBox="0 0 10 10"><path d="M3 1.4L7 5L3 8.6Z" fill="#3c3c3c"/></svg>
<div style="left:66px;top:1026px;width:645px;height:12px;background:linear-gradient(#f4f4f4 0%,#e6e6e6 40%,#d2d2d2 60%,#c4c4c4 100%);border:1px solid #8e8e8e;border-radius:2px;box-shadow:inset 0 0 0 1px rgba(255,255,255,.6)"></div>
<div style="left:384px;top:1029px;width:1.3px;height:6.5px;background:#3e3e3e"></div>
<div style="left:385.3px;top:1029px;width:1px;height:6.5px;background:#f8f8f8"></div>
<div style="left:387px;top:1029px;width:1.3px;height:6.5px;background:#3e3e3e"></div>
<div style="left:388.3px;top:1029px;width:1px;height:6.5px;background:#f8f8f8"></div>
<div style="left:390px;top:1029px;width:1.3px;height:6.5px;background:#3e3e3e"></div>
<div style="left:391.3px;top:1029px;width:1px;height:6.5px;background:#f8f8f8"></div>
<span class="t" style="left:48.30px;top:1043.00px;letter-spacing:-0.841px;">Somme</span>
<span class="t" style="left:1161.97px;top:1043.00px;letter-spacing:0.000px;">2</span>
<span class="t" style="left:1249.67px;top:1043.00px;letter-spacing:0.000px;">0</span>
<span class="t" style="left:1344.28px;top:1043.00px;letter-spacing:0.000px;">0</span>
<span class="t" style="left:1449.17px;top:1043.00px;letter-spacing:0.000px;">0</span>
<span class="t" style="left:22.50px;top:1070.00px;letter-spacing:-0.266px;">Profit (commandes sélectionnées)</span>
<div style="left:187px;top:1067px;width:86px;height:20px;background:#fff;border:1px solid #8a8a8a"></div>
<span class="t" style="left:232.40px;top:1072.00px;letter-spacing:0.383px;font-weight:bold;font-size:12px;">425.98</span>
<div style="left:1046px;top:1065px;width:215px;height:23px;background:linear-gradient(#ffffff 0%,#fdfeff 50%,#f1f6fc 100%);border:1.4px solid #1b3d6e;border-radius:2.6px;box-shadow:inset 0 0 0 1px #dbe8f8"></div>
<svg style="left:1049px;top:1071px" width="15" height="12" viewBox="0 0 15 12"><path d="M0.6 1.2H13.6L7.5 7.6H6.7Z" fill="#e9f2fd" stroke="#8ca6e0" stroke-width="1.1" stroke-linejoin="round"/><path d="M2.9 10.1H4.7M6.2 10.1H8M9.5 10.1H11.3" stroke="#000" stroke-width="1.7"/></svg>
<span class="t" style="left:1069.60px;top:1071.00px;letter-spacing:-0.289px;">Paramètres d&#x27;exportation vers le registre</span>
<div style="left:1269px;top:1065px;width:276px;height:23px;background:linear-gradient(#ffffff 0%,#fdfeff 50%,#f1f6fc 100%);border:1.4px solid #1b3d6e;border-radius:2.6px;box-shadow:inset 0 0 0 1px #dbe8f8"></div>
<svg style="left:1271.5px;top:1069.3px" width="14" height="14" viewBox="0 0 14 14"><path d="M5.6 1.8H8.4V5.6H12.2V8.4H8.4V12.2H5.6V8.4H1.8V5.6H5.6Z" fill="#22b81c" stroke="#1ba31a" stroke-width="2" stroke-linejoin="round"/><path d="M5.8 1.6H8V5.8H12V6.8H5.8Z" fill="#6ae854" fill-opacity="0.65"/></svg>
<span class="t" style="left:1303.10px;top:1071.00px;letter-spacing:-0.243px;">Exporter les cmds sélectionnées vers le registre.</span>
<div style="left:1560px;top:1046px;width:1.2px;height:1.2px;background:#b8b4a2"></div>
<div style="left:1560px;top:1049px;width:1.2px;height:1.2px;background:#b8b4a2"></div>
<div style="left:1560px;top:1052px;width:1.2px;height:1.2px;background:#b8b4a2"></div>
<div style="left:1556px;top:1086px;width:1.4px;height:1.4px;background:#b4b0a0"></div>
<div style="left:1553px;top:1089px;width:1.4px;height:1.4px;background:#b4b0a0"></div>
<div style="left:1556px;top:1089px;width:1.4px;height:1.4px;background:#b4b0a0"></div>
<div style="left:1550px;top:1092px;width:1.4px;height:1.4px;background:#b4b0a0"></div>
<div style="left:1553px;top:1092px;width:1.4px;height:1.4px;background:#b4b0a0"></div>
<div style="left:1556px;top:1092px;width:1.4px;height:1.4px;background:#b4b0a0"></div>
</body></html>
